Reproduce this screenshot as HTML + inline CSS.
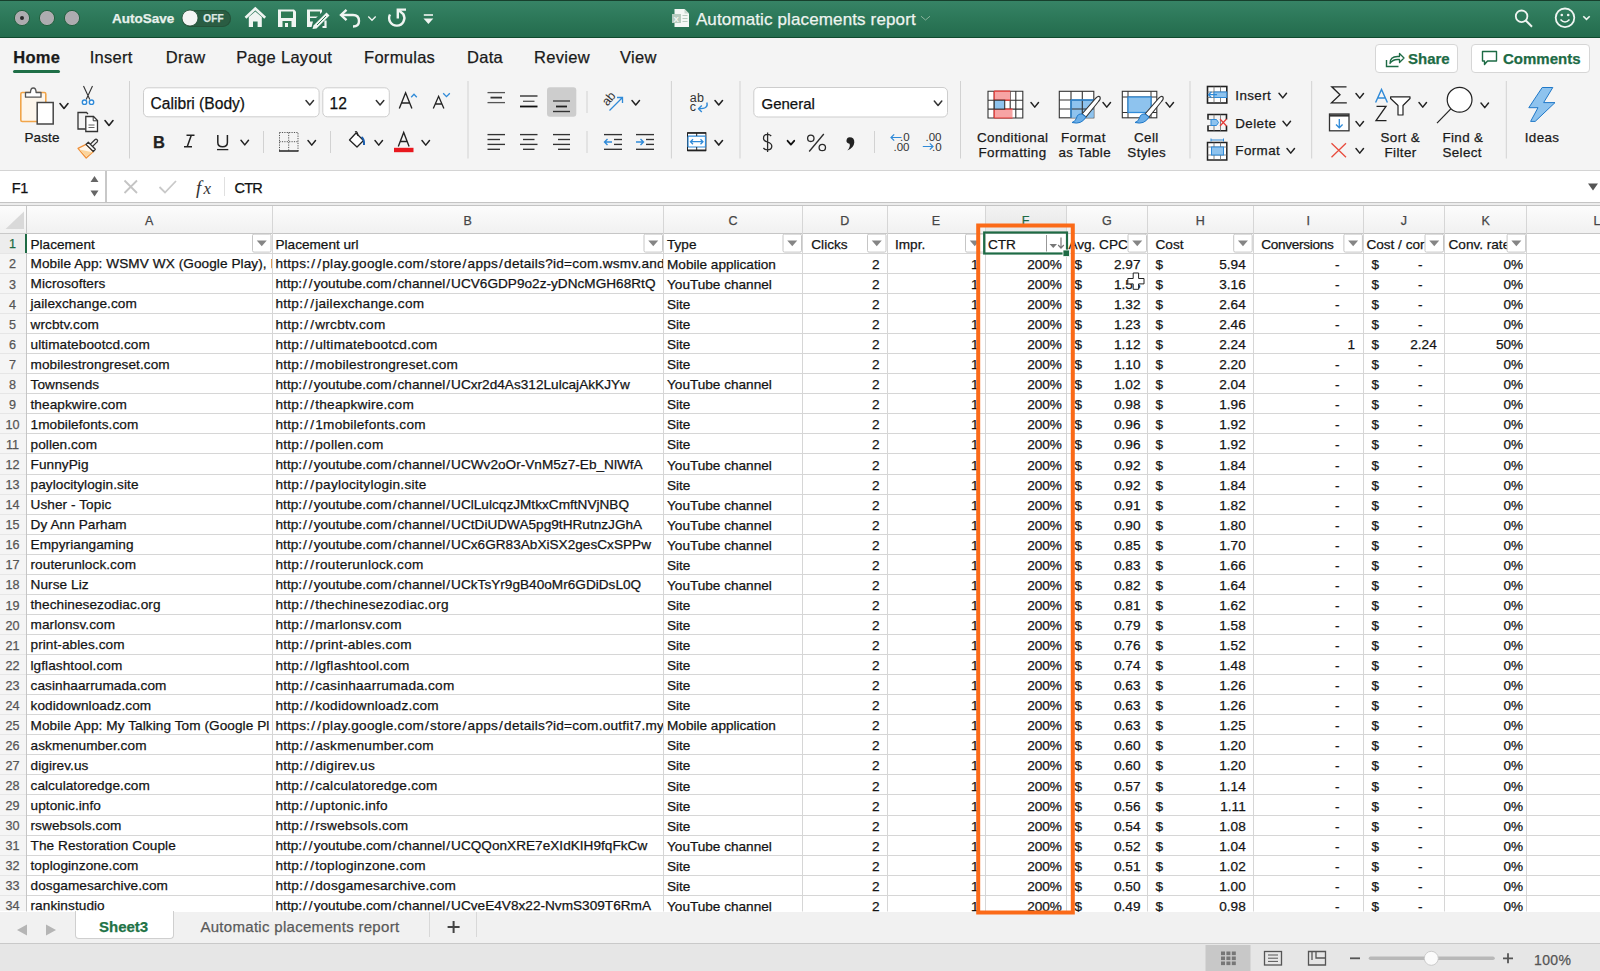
<!DOCTYPE html><html><head><meta charset="utf-8"><style>
html,body{margin:0;padding:0;}
body{width:1600px;height:971px;position:relative;overflow:hidden;background:#fff;font-family:"Liberation Sans", sans-serif;}
.sl{margin:0 1px}
.t{position:absolute;white-space:nowrap;line-height:1;-webkit-text-stroke:0.25px currentColor;}
svg{overflow:visible}
</style></head><body>
<div style="position:absolute;left:0px;top:0px;width:1600px;height:38px;background:linear-gradient(#378466,#2b7657 55%,#236b4d);"></div>
<div style="position:absolute;left:0px;top:0px;width:1600px;height:1px;background:#173f2c;"></div>
<div style="position:absolute;left:0px;top:37px;width:1600px;height:1px;background:#0f4a2e;"></div>
<div style="position:absolute;left:0px;top:38px;width:1600px;height:1px;background:#fafafa;"></div>
<svg style="position:absolute;left:13.3px;top:9px;" width="18" height="18" viewBox="0 0 18 18"><circle cx="9" cy="9" r="7.6" fill="#aeacb0" stroke="#23603f" stroke-width="1"/></svg>
<svg style="position:absolute;left:38.4px;top:9px;" width="18" height="18" viewBox="0 0 18 18"><circle cx="9" cy="9" r="7.6" fill="#aeacb0" stroke="#23603f" stroke-width="1"/></svg>
<svg style="position:absolute;left:63.099999999999994px;top:9px;" width="18" height="18" viewBox="0 0 18 18"><circle cx="9" cy="9" r="7.6" fill="#aeacb0" stroke="#23603f" stroke-width="1"/></svg>
<svg style="position:absolute;left:13.3px;top:9px;" width="18" height="18" viewBox="0 0 18 18"><circle cx="9" cy="9" r="2" fill="#2a2a2a"/></svg>
<div class="t" style="left:111.90px;top:12.27px;font-size:13.5px;color:#e8f1ec;font-weight:bold;">AutoSave</div>
<div style="position:absolute;left:182px;top:9.5px;width:49px;height:17.5px;background:#2a5d43;border-radius:9px;box-shadow:inset 0 0 0 1px #245239;"></div>
<svg style="position:absolute;left:181px;top:9px;" width="18" height="18" viewBox="0 0 18 18"><circle cx="9" cy="9" r="8" fill="#f4f4f4" stroke="#1f4a34" stroke-width="0.8"/></svg>
<div class="t" style="left:203.30px;top:13.94px;font-size:10px;color:#dfe9e3;font-weight:bold;letter-spacing:0.1px;">OFF</div>
<div style="position:absolute;left:0px;top:38px;width:1600px;height:132px;background:#f4f4f4;"></div>
<div class="t" style="left:13.20px;top:49.13px;font-size:16.5px;color:#1a1a1a;font-weight:600;letter-spacing:0.3px;">Home</div>
<div class="t" style="left:89.70px;top:49.13px;font-size:16.5px;color:#1a1a1a;font-weight:normal;letter-spacing:0.3px;">Insert</div>
<div class="t" style="left:165.70px;top:49.13px;font-size:16.5px;color:#1a1a1a;font-weight:normal;letter-spacing:0.3px;">Draw</div>
<div class="t" style="left:236.30px;top:49.13px;font-size:16.5px;color:#1a1a1a;font-weight:normal;letter-spacing:0.3px;">Page Layout</div>
<div class="t" style="left:364.00px;top:49.13px;font-size:16.5px;color:#1a1a1a;font-weight:normal;letter-spacing:0.3px;">Formulas</div>
<div class="t" style="left:467.00px;top:49.13px;font-size:16.5px;color:#1a1a1a;font-weight:normal;letter-spacing:0.3px;">Data</div>
<div class="t" style="left:534.00px;top:49.13px;font-size:16.5px;color:#1a1a1a;font-weight:normal;letter-spacing:0.3px;">Review</div>
<div class="t" style="left:620.00px;top:49.13px;font-size:16.5px;color:#1a1a1a;font-weight:normal;letter-spacing:0.3px;">View</div>
<div style="position:absolute;left:12.5px;top:69.8px;width:47.5px;height:3.5px;background:#1f6f47;border-radius:2px;"></div>
<div style="position:absolute;left:1375px;top:43.5px;width:82.5px;height:29.5px;background:#fff;border:1px solid #d6d6d6;border-radius:4px;box-sizing:border-box;"></div>
<div style="position:absolute;left:1471px;top:43.5px;width:119px;height:29.5px;background:#fff;border:1px solid #d6d6d6;border-radius:4px;box-sizing:border-box;"></div>
<div class="t" style="left:1408.00px;top:51.40px;font-size:15px;color:#1d6b45;font-weight:bold;">Share</div>
<div class="t" style="left:1503.00px;top:51.40px;font-size:15px;color:#1d6b45;font-weight:bold;">Comments</div>
<div style="position:absolute;left:0px;top:170px;width:1600px;height:1px;background:#d4d4d4;"></div>
<div style="position:absolute;left:0px;top:171px;width:1600px;height:31px;background:#fff;"></div>
<div style="position:absolute;left:105px;top:171px;width:1.5px;height:31px;background:#c8c8c8;"></div>
<div style="position:absolute;left:0px;top:202px;width:1600px;height:1px;background:#c4c4c4;"></div>
<div style="position:absolute;left:0px;top:203px;width:1600px;height:2px;background:#ececec;"></div>
<div style="position:absolute;left:0px;top:205px;width:1600px;height:1px;background:#c4c4c4;"></div>
<div class="t" style="left:11.70px;top:180.93px;font-size:14.5px;color:#111;font-weight:normal;letter-spacing:-0.3px;">F1</div>
<div class="t" style="left:234.60px;top:180.93px;font-size:14.5px;color:#111;font-weight:normal;letter-spacing:-0.8px;">CTR</div>
<div style="position:absolute;left:224px;top:177px;width:1px;height:19px;background:#e0e0e0;"></div>
<div style="position:absolute;left:0px;top:206px;width:1600px;height:27.30000000000001px;background:linear-gradient(#fcfcfc,#f1f1f1);"></div>
<div style="position:absolute;left:985px;top:206px;width:81.40000000000009px;height:27.30000000000001px;background:linear-gradient(#f3f3f3,#e6e6e6);"></div>
<div style="position:absolute;left:0px;top:233.3px;width:26.5px;height:678.2px;background:#f5f5f5;"></div>
<div style="position:absolute;left:0px;top:233.3px;width:26.5px;height:20.06px;background:#ededed;"></div>
<svg style="position:absolute;left:0;top:0" width="1600" height="971"><line x1="26.5" y1="233.50" x2="1600" y2="233.50" stroke="#c6c6c6" stroke-width="1"/><line x1="0" y1="233.50" x2="26.5" y2="233.50" stroke="#c9c9c9" stroke-width="1"/><line x1="26.5" y1="253.50" x2="1600" y2="253.50" stroke="#d6d6d6" stroke-width="1"/><line x1="0" y1="253.50" x2="26.5" y2="253.50" stroke="#e6e6e6" stroke-width="1"/><line x1="26.5" y1="273.50" x2="1600" y2="273.50" stroke="#d6d6d6" stroke-width="1"/><line x1="0" y1="273.50" x2="26.5" y2="273.50" stroke="#e6e6e6" stroke-width="1"/><line x1="26.5" y1="293.50" x2="1600" y2="293.50" stroke="#d6d6d6" stroke-width="1"/><line x1="0" y1="293.50" x2="26.5" y2="293.50" stroke="#e6e6e6" stroke-width="1"/><line x1="26.5" y1="313.50" x2="1600" y2="313.50" stroke="#d6d6d6" stroke-width="1"/><line x1="0" y1="313.50" x2="26.5" y2="313.50" stroke="#e6e6e6" stroke-width="1"/><line x1="26.5" y1="333.50" x2="1600" y2="333.50" stroke="#d6d6d6" stroke-width="1"/><line x1="0" y1="333.50" x2="26.5" y2="333.50" stroke="#e6e6e6" stroke-width="1"/><line x1="26.5" y1="353.50" x2="1600" y2="353.50" stroke="#d6d6d6" stroke-width="1"/><line x1="0" y1="353.50" x2="26.5" y2="353.50" stroke="#e6e6e6" stroke-width="1"/><line x1="26.5" y1="373.50" x2="1600" y2="373.50" stroke="#d6d6d6" stroke-width="1"/><line x1="0" y1="373.50" x2="26.5" y2="373.50" stroke="#e6e6e6" stroke-width="1"/><line x1="26.5" y1="393.50" x2="1600" y2="393.50" stroke="#d6d6d6" stroke-width="1"/><line x1="0" y1="393.50" x2="26.5" y2="393.50" stroke="#e6e6e6" stroke-width="1"/><line x1="26.5" y1="413.50" x2="1600" y2="413.50" stroke="#d6d6d6" stroke-width="1"/><line x1="0" y1="413.50" x2="26.5" y2="413.50" stroke="#e6e6e6" stroke-width="1"/><line x1="26.5" y1="433.50" x2="1600" y2="433.50" stroke="#d6d6d6" stroke-width="1"/><line x1="0" y1="433.50" x2="26.5" y2="433.50" stroke="#e6e6e6" stroke-width="1"/><line x1="26.5" y1="453.50" x2="1600" y2="453.50" stroke="#d6d6d6" stroke-width="1"/><line x1="0" y1="453.50" x2="26.5" y2="453.50" stroke="#e6e6e6" stroke-width="1"/><line x1="26.5" y1="474.50" x2="1600" y2="474.50" stroke="#d6d6d6" stroke-width="1"/><line x1="0" y1="474.50" x2="26.5" y2="474.50" stroke="#e6e6e6" stroke-width="1"/><line x1="26.5" y1="494.50" x2="1600" y2="494.50" stroke="#d6d6d6" stroke-width="1"/><line x1="0" y1="494.50" x2="26.5" y2="494.50" stroke="#e6e6e6" stroke-width="1"/><line x1="26.5" y1="514.50" x2="1600" y2="514.50" stroke="#d6d6d6" stroke-width="1"/><line x1="0" y1="514.50" x2="26.5" y2="514.50" stroke="#e6e6e6" stroke-width="1"/><line x1="26.5" y1="534.50" x2="1600" y2="534.50" stroke="#d6d6d6" stroke-width="1"/><line x1="0" y1="534.50" x2="26.5" y2="534.50" stroke="#e6e6e6" stroke-width="1"/><line x1="26.5" y1="554.50" x2="1600" y2="554.50" stroke="#d6d6d6" stroke-width="1"/><line x1="0" y1="554.50" x2="26.5" y2="554.50" stroke="#e6e6e6" stroke-width="1"/><line x1="26.5" y1="574.50" x2="1600" y2="574.50" stroke="#d6d6d6" stroke-width="1"/><line x1="0" y1="574.50" x2="26.5" y2="574.50" stroke="#e6e6e6" stroke-width="1"/><line x1="26.5" y1="594.50" x2="1600" y2="594.50" stroke="#d6d6d6" stroke-width="1"/><line x1="0" y1="594.50" x2="26.5" y2="594.50" stroke="#e6e6e6" stroke-width="1"/><line x1="26.5" y1="614.50" x2="1600" y2="614.50" stroke="#d6d6d6" stroke-width="1"/><line x1="0" y1="614.50" x2="26.5" y2="614.50" stroke="#e6e6e6" stroke-width="1"/><line x1="26.5" y1="634.50" x2="1600" y2="634.50" stroke="#d6d6d6" stroke-width="1"/><line x1="0" y1="634.50" x2="26.5" y2="634.50" stroke="#e6e6e6" stroke-width="1"/><line x1="26.5" y1="654.50" x2="1600" y2="654.50" stroke="#d6d6d6" stroke-width="1"/><line x1="0" y1="654.50" x2="26.5" y2="654.50" stroke="#e6e6e6" stroke-width="1"/><line x1="26.5" y1="674.50" x2="1600" y2="674.50" stroke="#d6d6d6" stroke-width="1"/><line x1="0" y1="674.50" x2="26.5" y2="674.50" stroke="#e6e6e6" stroke-width="1"/><line x1="26.5" y1="694.50" x2="1600" y2="694.50" stroke="#d6d6d6" stroke-width="1"/><line x1="0" y1="694.50" x2="26.5" y2="694.50" stroke="#e6e6e6" stroke-width="1"/><line x1="26.5" y1="714.50" x2="1600" y2="714.50" stroke="#d6d6d6" stroke-width="1"/><line x1="0" y1="714.50" x2="26.5" y2="714.50" stroke="#e6e6e6" stroke-width="1"/><line x1="26.5" y1="734.50" x2="1600" y2="734.50" stroke="#d6d6d6" stroke-width="1"/><line x1="0" y1="734.50" x2="26.5" y2="734.50" stroke="#e6e6e6" stroke-width="1"/><line x1="26.5" y1="754.50" x2="1600" y2="754.50" stroke="#d6d6d6" stroke-width="1"/><line x1="0" y1="754.50" x2="26.5" y2="754.50" stroke="#e6e6e6" stroke-width="1"/><line x1="26.5" y1="774.50" x2="1600" y2="774.50" stroke="#d6d6d6" stroke-width="1"/><line x1="0" y1="774.50" x2="26.5" y2="774.50" stroke="#e6e6e6" stroke-width="1"/><line x1="26.5" y1="794.50" x2="1600" y2="794.50" stroke="#d6d6d6" stroke-width="1"/><line x1="0" y1="794.50" x2="26.5" y2="794.50" stroke="#e6e6e6" stroke-width="1"/><line x1="26.5" y1="815.50" x2="1600" y2="815.50" stroke="#d6d6d6" stroke-width="1"/><line x1="0" y1="815.50" x2="26.5" y2="815.50" stroke="#e6e6e6" stroke-width="1"/><line x1="26.5" y1="835.50" x2="1600" y2="835.50" stroke="#d6d6d6" stroke-width="1"/><line x1="0" y1="835.50" x2="26.5" y2="835.50" stroke="#e6e6e6" stroke-width="1"/><line x1="26.5" y1="855.50" x2="1600" y2="855.50" stroke="#d6d6d6" stroke-width="1"/><line x1="0" y1="855.50" x2="26.5" y2="855.50" stroke="#e6e6e6" stroke-width="1"/><line x1="26.5" y1="875.50" x2="1600" y2="875.50" stroke="#d6d6d6" stroke-width="1"/><line x1="0" y1="875.50" x2="26.5" y2="875.50" stroke="#e6e6e6" stroke-width="1"/><line x1="26.5" y1="895.50" x2="1600" y2="895.50" stroke="#d6d6d6" stroke-width="1"/><line x1="0" y1="895.50" x2="26.5" y2="895.50" stroke="#e6e6e6" stroke-width="1"/><line x1="26.50" y1="206" x2="26.50" y2="911.5" stroke="#c6c6c6" stroke-width="1"/><line x1="272.50" y1="206" x2="272.50" y2="911.5" stroke="#d6d6d6" stroke-width="1"/><line x1="663.50" y1="206" x2="663.50" y2="911.5" stroke="#d6d6d6" stroke-width="1"/><line x1="802.50" y1="206" x2="802.50" y2="911.5" stroke="#d6d6d6" stroke-width="1"/><line x1="887.50" y1="206" x2="887.50" y2="911.5" stroke="#d6d6d6" stroke-width="1"/><line x1="985.50" y1="206" x2="985.50" y2="911.5" stroke="#d6d6d6" stroke-width="1"/><line x1="1066.50" y1="206" x2="1066.50" y2="911.5" stroke="#d6d6d6" stroke-width="1"/><line x1="1147.50" y1="206" x2="1147.50" y2="911.5" stroke="#d6d6d6" stroke-width="1"/><line x1="1253.50" y1="206" x2="1253.50" y2="911.5" stroke="#d6d6d6" stroke-width="1"/><line x1="1363.50" y1="206" x2="1363.50" y2="911.5" stroke="#d6d6d6" stroke-width="1"/><line x1="1444.50" y1="206" x2="1444.50" y2="911.5" stroke="#d6d6d6" stroke-width="1"/><line x1="1526.50" y1="206" x2="1526.50" y2="911.5" stroke="#d6d6d6" stroke-width="1"/></svg>
<div class="t" style="left:149.25px;transform:translateX(-50%);top:215.32px;font-size:12.5px;color:#454545;font-weight:normal;">A</div>
<div class="t" style="left:467.75px;transform:translateX(-50%);top:215.32px;font-size:12.5px;color:#454545;font-weight:normal;">B</div>
<div class="t" style="left:733.00px;transform:translateX(-50%);top:215.32px;font-size:12.5px;color:#454545;font-weight:normal;">C</div>
<div class="t" style="left:844.75px;transform:translateX(-50%);top:215.32px;font-size:12.5px;color:#454545;font-weight:normal;">D</div>
<div class="t" style="left:936.00px;transform:translateX(-50%);top:215.32px;font-size:12.5px;color:#454545;font-weight:normal;">E</div>
<div class="t" style="left:1025.70px;transform:translateX(-50%);top:215.32px;font-size:12.5px;color:#1d6b45;font-weight:normal;">F</div>
<div class="t" style="left:1106.95px;transform:translateX(-50%);top:215.32px;font-size:12.5px;color:#454545;font-weight:normal;">G</div>
<div class="t" style="left:1200.35px;transform:translateX(-50%);top:215.32px;font-size:12.5px;color:#454545;font-weight:normal;">H</div>
<div class="t" style="left:1308.30px;transform:translateX(-50%);top:215.32px;font-size:12.5px;color:#454545;font-weight:normal;">I</div>
<div class="t" style="left:1403.95px;transform:translateX(-50%);top:215.32px;font-size:12.5px;color:#454545;font-weight:normal;">J</div>
<div class="t" style="left:1485.55px;transform:translateX(-50%);top:215.32px;font-size:12.5px;color:#454545;font-weight:normal;">K</div>
<div class="t" style="left:1597.00px;transform:translateX(-50%);top:215.32px;font-size:12.5px;color:#454545;font-weight:normal;">L</div>
<div class="t" style="left:12.60px;transform:translateX(-50%);top:238.43px;font-size:12.6px;color:#1d6b45;font-weight:normal;">1</div>
<div class="t" style="left:12.60px;transform:translateX(-50%);top:258.49px;font-size:12.6px;color:#555;font-weight:normal;">2</div>
<div class="t" style="left:12.60px;transform:translateX(-50%);top:278.55px;font-size:12.6px;color:#555;font-weight:normal;">3</div>
<div class="t" style="left:12.60px;transform:translateX(-50%);top:298.61px;font-size:12.6px;color:#555;font-weight:normal;">4</div>
<div class="t" style="left:12.60px;transform:translateX(-50%);top:318.67px;font-size:12.6px;color:#555;font-weight:normal;">5</div>
<div class="t" style="left:12.60px;transform:translateX(-50%);top:338.73px;font-size:12.6px;color:#555;font-weight:normal;">6</div>
<div class="t" style="left:12.60px;transform:translateX(-50%);top:358.79px;font-size:12.6px;color:#555;font-weight:normal;">7</div>
<div class="t" style="left:12.60px;transform:translateX(-50%);top:378.85px;font-size:12.6px;color:#555;font-weight:normal;">8</div>
<div class="t" style="left:12.60px;transform:translateX(-50%);top:398.91px;font-size:12.6px;color:#555;font-weight:normal;">9</div>
<div class="t" style="left:12.60px;transform:translateX(-50%);top:418.97px;font-size:12.6px;color:#555;font-weight:normal;">10</div>
<div class="t" style="left:12.60px;transform:translateX(-50%);top:439.03px;font-size:12.6px;color:#555;font-weight:normal;">11</div>
<div class="t" style="left:12.60px;transform:translateX(-50%);top:459.09px;font-size:12.6px;color:#555;font-weight:normal;">12</div>
<div class="t" style="left:12.60px;transform:translateX(-50%);top:479.15px;font-size:12.6px;color:#555;font-weight:normal;">13</div>
<div class="t" style="left:12.60px;transform:translateX(-50%);top:499.21px;font-size:12.6px;color:#555;font-weight:normal;">14</div>
<div class="t" style="left:12.60px;transform:translateX(-50%);top:519.27px;font-size:12.6px;color:#555;font-weight:normal;">15</div>
<div class="t" style="left:12.60px;transform:translateX(-50%);top:539.33px;font-size:12.6px;color:#555;font-weight:normal;">16</div>
<div class="t" style="left:12.60px;transform:translateX(-50%);top:559.39px;font-size:12.6px;color:#555;font-weight:normal;">17</div>
<div class="t" style="left:12.60px;transform:translateX(-50%);top:579.45px;font-size:12.6px;color:#555;font-weight:normal;">18</div>
<div class="t" style="left:12.60px;transform:translateX(-50%);top:599.51px;font-size:12.6px;color:#555;font-weight:normal;">19</div>
<div class="t" style="left:12.60px;transform:translateX(-50%);top:619.57px;font-size:12.6px;color:#555;font-weight:normal;">20</div>
<div class="t" style="left:12.60px;transform:translateX(-50%);top:639.63px;font-size:12.6px;color:#555;font-weight:normal;">21</div>
<div class="t" style="left:12.60px;transform:translateX(-50%);top:659.69px;font-size:12.6px;color:#555;font-weight:normal;">22</div>
<div class="t" style="left:12.60px;transform:translateX(-50%);top:679.75px;font-size:12.6px;color:#555;font-weight:normal;">23</div>
<div class="t" style="left:12.60px;transform:translateX(-50%);top:699.81px;font-size:12.6px;color:#555;font-weight:normal;">24</div>
<div class="t" style="left:12.60px;transform:translateX(-50%);top:719.87px;font-size:12.6px;color:#555;font-weight:normal;">25</div>
<div class="t" style="left:12.60px;transform:translateX(-50%);top:739.93px;font-size:12.6px;color:#555;font-weight:normal;">26</div>
<div class="t" style="left:12.60px;transform:translateX(-50%);top:759.99px;font-size:12.6px;color:#555;font-weight:normal;">27</div>
<div class="t" style="left:12.60px;transform:translateX(-50%);top:780.05px;font-size:12.6px;color:#555;font-weight:normal;">28</div>
<div class="t" style="left:12.60px;transform:translateX(-50%);top:800.11px;font-size:12.6px;color:#555;font-weight:normal;">29</div>
<div class="t" style="left:12.60px;transform:translateX(-50%);top:820.17px;font-size:12.6px;color:#555;font-weight:normal;">30</div>
<div class="t" style="left:12.60px;transform:translateX(-50%);top:840.23px;font-size:12.6px;color:#555;font-weight:normal;">31</div>
<div class="t" style="left:12.60px;transform:translateX(-50%);top:860.29px;font-size:12.6px;color:#555;font-weight:normal;">32</div>
<div class="t" style="left:12.60px;transform:translateX(-50%);top:880.35px;font-size:12.6px;color:#555;font-weight:normal;">33</div>
<div class="t" style="left:12.60px;transform:translateX(-50%);top:900.41px;font-size:12.6px;color:#555;font-weight:normal;">34</div>
<div style="position:absolute;left:25px;top:234.3px;width:2.2px;height:19.06px;background:#1e6b45;"></div>
<div class="t" style="left:30.50px;top:237.89px;font-size:13.6px;color:#141414;font-weight:normal;">Placement</div>
<div class="t" style="left:275.50px;top:237.89px;font-size:13.6px;color:#141414;font-weight:normal;">Placement url</div>
<div class="t" style="left:667.00px;top:237.89px;font-size:13.6px;color:#141414;font-weight:normal;">Type</div>
<div class="t" style="left:811.30px;top:237.89px;font-size:13.6px;color:#141414;font-weight:normal;">Clicks</div>
<div class="t" style="left:895.00px;top:237.89px;font-size:13.6px;color:#141414;font-weight:normal;">Impr.</div>
<div class="t" style="left:988.00px;top:237.89px;font-size:13.6px;color:#141414;font-weight:normal;">CTR</div>
<div class="t" style="left:1068.40px;top:237.89px;font-size:13.6px;color:#141414;font-weight:normal;">Avg. CPC</div>
<div class="t" style="left:1155.50px;top:237.89px;font-size:13.6px;color:#141414;font-weight:normal;">Cost</div>
<div class="t" style="left:1261.20px;top:237.89px;font-size:13.6px;color:#141414;font-weight:normal;letter-spacing:-0.3px;">Conversions</div>
<div class="t" style="left:1366.40px;top:237.89px;font-size:13.6px;color:#141414;font-weight:normal;">Cost / cor</div>
<div class="t" style="left:1448.50px;top:237.89px;font-size:13.6px;color:#141414;font-weight:normal;">Conv. rate</div>
<div style="position:absolute;left:27.50px;top:254.35px;width:244.00px;height:19.6px;overflow:hidden"><div class="t" style="left:3.00px;top:3px;font-size:13.6px;color:#141414;letter-spacing:0.08px;">Mobile App: WSMV WX (Google Play), I</div></div>
<div style="position:absolute;left:273.00px;top:254.35px;width:390.00px;height:19.6px;overflow:hidden"><div class="t" style="left:2.50px;top:3px;font-size:13.6px;color:#141414;letter-spacing:0.25px;">https:<span class=sl>/</span><span class=sl>/</span>play.google.com<span class=sl>/</span>store<span class=sl>/</span>apps<span class=sl>/</span>details?id=com.wsmv.and</div></div>
<div class="t" style="left:667.00px;top:257.95px;font-size:13.6px;color:#141414;font-weight:normal;">Mobile application</div>
<div class="t" style="right:720.50px;top:257.95px;font-size:13.6px;color:#141414;font-weight:normal;">2</div>
<div class="t" style="right:621.50px;top:257.95px;font-size:13.6px;color:#141414;font-weight:normal;">1</div>
<div class="t" style="right:538.10px;top:257.95px;font-size:13.6px;color:#141414;font-weight:normal;">200%</div>
<div class="t" style="left:1074.40px;top:257.95px;font-size:13.6px;color:#141414;font-weight:normal;">$</div>
<div class="t" style="right:459.50px;top:257.95px;font-size:13.6px;color:#141414;font-weight:normal;">2.97</div>
<div class="t" style="left:1155.50px;top:257.95px;font-size:13.6px;color:#141414;font-weight:normal;">$</div>
<div class="t" style="right:354.30px;top:257.95px;font-size:13.6px;color:#141414;font-weight:normal;">5.94</div>
<div class="t" style="right:260.60px;top:257.95px;font-size:13.6px;color:#141414;font-weight:normal;">-</div>
<div class="t" style="right:177.50px;top:257.95px;font-size:13.6px;color:#141414;font-weight:normal;">-</div>
<div class="t" style="right:76.90px;top:257.95px;font-size:13.6px;color:#141414;font-weight:normal;">0%</div>
<div class="t" style="left:1371.40px;top:257.95px;font-size:13.6px;color:#141414;font-weight:normal;">$</div>
<div style="position:absolute;left:27.50px;top:274.41px;width:244.00px;height:19.6px;overflow:hidden"><div class="t" style="left:3.00px;top:3px;font-size:13.6px;color:#141414;letter-spacing:0.08px;">Microsofters</div></div>
<div style="position:absolute;left:273.00px;top:274.41px;width:390.00px;height:19.6px;overflow:hidden"><div class="t" style="left:2.50px;top:3px;font-size:13.6px;color:#141414;letter-spacing:0.02px;">http:<span class=sl>/</span><span class=sl>/</span>youtube.com<span class=sl>/</span>channel<span class=sl>/</span>UCV6GDP9o2z-yDNcMGH68RtQ</div></div>
<div class="t" style="left:667.00px;top:278.01px;font-size:13.6px;color:#141414;font-weight:normal;">YouTube channel</div>
<div class="t" style="right:720.50px;top:278.01px;font-size:13.6px;color:#141414;font-weight:normal;">2</div>
<div class="t" style="right:621.50px;top:278.01px;font-size:13.6px;color:#141414;font-weight:normal;">1</div>
<div class="t" style="right:538.10px;top:278.01px;font-size:13.6px;color:#141414;font-weight:normal;">200%</div>
<div class="t" style="left:1074.40px;top:278.01px;font-size:13.6px;color:#141414;font-weight:normal;">$</div>
<div class="t" style="right:459.50px;top:278.01px;font-size:13.6px;color:#141414;font-weight:normal;">1.58</div>
<div class="t" style="left:1155.50px;top:278.01px;font-size:13.6px;color:#141414;font-weight:normal;">$</div>
<div class="t" style="right:354.30px;top:278.01px;font-size:13.6px;color:#141414;font-weight:normal;">3.16</div>
<div class="t" style="right:260.60px;top:278.01px;font-size:13.6px;color:#141414;font-weight:normal;">-</div>
<div class="t" style="right:177.50px;top:278.01px;font-size:13.6px;color:#141414;font-weight:normal;">-</div>
<div class="t" style="right:76.90px;top:278.01px;font-size:13.6px;color:#141414;font-weight:normal;">0%</div>
<div class="t" style="left:1371.40px;top:278.01px;font-size:13.6px;color:#141414;font-weight:normal;">$</div>
<div style="position:absolute;left:27.50px;top:294.47px;width:244.00px;height:19.6px;overflow:hidden"><div class="t" style="left:3.00px;top:3px;font-size:13.6px;color:#141414;letter-spacing:0.08px;">jailexchange.com</div></div>
<div style="position:absolute;left:273.00px;top:294.47px;width:390.00px;height:19.6px;overflow:hidden"><div class="t" style="left:2.50px;top:3px;font-size:13.6px;color:#141414;letter-spacing:0.25px;">http:<span class=sl>/</span><span class=sl>/</span>jailexchange.com</div></div>
<div class="t" style="left:667.00px;top:298.07px;font-size:13.6px;color:#141414;font-weight:normal;">Site</div>
<div class="t" style="right:720.50px;top:298.07px;font-size:13.6px;color:#141414;font-weight:normal;">2</div>
<div class="t" style="right:621.50px;top:298.07px;font-size:13.6px;color:#141414;font-weight:normal;">1</div>
<div class="t" style="right:538.10px;top:298.07px;font-size:13.6px;color:#141414;font-weight:normal;">200%</div>
<div class="t" style="left:1074.40px;top:298.07px;font-size:13.6px;color:#141414;font-weight:normal;">$</div>
<div class="t" style="right:459.50px;top:298.07px;font-size:13.6px;color:#141414;font-weight:normal;">1.32</div>
<div class="t" style="left:1155.50px;top:298.07px;font-size:13.6px;color:#141414;font-weight:normal;">$</div>
<div class="t" style="right:354.30px;top:298.07px;font-size:13.6px;color:#141414;font-weight:normal;">2.64</div>
<div class="t" style="right:260.60px;top:298.07px;font-size:13.6px;color:#141414;font-weight:normal;">-</div>
<div class="t" style="right:177.50px;top:298.07px;font-size:13.6px;color:#141414;font-weight:normal;">-</div>
<div class="t" style="right:76.90px;top:298.07px;font-size:13.6px;color:#141414;font-weight:normal;">0%</div>
<div class="t" style="left:1371.40px;top:298.07px;font-size:13.6px;color:#141414;font-weight:normal;">$</div>
<div style="position:absolute;left:27.50px;top:314.53px;width:244.00px;height:19.6px;overflow:hidden"><div class="t" style="left:3.00px;top:3px;font-size:13.6px;color:#141414;letter-spacing:0.08px;">wrcbtv.com</div></div>
<div style="position:absolute;left:273.00px;top:314.53px;width:390.00px;height:19.6px;overflow:hidden"><div class="t" style="left:2.50px;top:3px;font-size:13.6px;color:#141414;letter-spacing:0.25px;">http:<span class=sl>/</span><span class=sl>/</span>wrcbtv.com</div></div>
<div class="t" style="left:667.00px;top:318.13px;font-size:13.6px;color:#141414;font-weight:normal;">Site</div>
<div class="t" style="right:720.50px;top:318.13px;font-size:13.6px;color:#141414;font-weight:normal;">2</div>
<div class="t" style="right:621.50px;top:318.13px;font-size:13.6px;color:#141414;font-weight:normal;">1</div>
<div class="t" style="right:538.10px;top:318.13px;font-size:13.6px;color:#141414;font-weight:normal;">200%</div>
<div class="t" style="left:1074.40px;top:318.13px;font-size:13.6px;color:#141414;font-weight:normal;">$</div>
<div class="t" style="right:459.50px;top:318.13px;font-size:13.6px;color:#141414;font-weight:normal;">1.23</div>
<div class="t" style="left:1155.50px;top:318.13px;font-size:13.6px;color:#141414;font-weight:normal;">$</div>
<div class="t" style="right:354.30px;top:318.13px;font-size:13.6px;color:#141414;font-weight:normal;">2.46</div>
<div class="t" style="right:260.60px;top:318.13px;font-size:13.6px;color:#141414;font-weight:normal;">-</div>
<div class="t" style="right:177.50px;top:318.13px;font-size:13.6px;color:#141414;font-weight:normal;">-</div>
<div class="t" style="right:76.90px;top:318.13px;font-size:13.6px;color:#141414;font-weight:normal;">0%</div>
<div class="t" style="left:1371.40px;top:318.13px;font-size:13.6px;color:#141414;font-weight:normal;">$</div>
<div style="position:absolute;left:27.50px;top:334.59px;width:244.00px;height:19.6px;overflow:hidden"><div class="t" style="left:3.00px;top:3px;font-size:13.6px;color:#141414;letter-spacing:0.08px;">ultimatebootcd.com</div></div>
<div style="position:absolute;left:273.00px;top:334.59px;width:390.00px;height:19.6px;overflow:hidden"><div class="t" style="left:2.50px;top:3px;font-size:13.6px;color:#141414;letter-spacing:0.25px;">http:<span class=sl>/</span><span class=sl>/</span>ultimatebootcd.com</div></div>
<div class="t" style="left:667.00px;top:338.19px;font-size:13.6px;color:#141414;font-weight:normal;">Site</div>
<div class="t" style="right:720.50px;top:338.19px;font-size:13.6px;color:#141414;font-weight:normal;">2</div>
<div class="t" style="right:621.50px;top:338.19px;font-size:13.6px;color:#141414;font-weight:normal;">1</div>
<div class="t" style="right:538.10px;top:338.19px;font-size:13.6px;color:#141414;font-weight:normal;">200%</div>
<div class="t" style="left:1074.40px;top:338.19px;font-size:13.6px;color:#141414;font-weight:normal;">$</div>
<div class="t" style="right:459.50px;top:338.19px;font-size:13.6px;color:#141414;font-weight:normal;">1.12</div>
<div class="t" style="left:1155.50px;top:338.19px;font-size:13.6px;color:#141414;font-weight:normal;">$</div>
<div class="t" style="right:354.30px;top:338.19px;font-size:13.6px;color:#141414;font-weight:normal;">2.24</div>
<div class="t" style="right:244.90px;top:338.19px;font-size:13.6px;color:#141414;font-weight:normal;">1</div>
<div class="t" style="right:163.30px;top:338.19px;font-size:13.6px;color:#141414;font-weight:normal;">2.24</div>
<div class="t" style="right:76.90px;top:338.19px;font-size:13.6px;color:#141414;font-weight:normal;">50%</div>
<div class="t" style="left:1371.40px;top:338.19px;font-size:13.6px;color:#141414;font-weight:normal;">$</div>
<div style="position:absolute;left:27.50px;top:354.65px;width:244.00px;height:19.6px;overflow:hidden"><div class="t" style="left:3.00px;top:3px;font-size:13.6px;color:#141414;letter-spacing:0.08px;">mobilestrongreset.com</div></div>
<div style="position:absolute;left:273.00px;top:354.65px;width:390.00px;height:19.6px;overflow:hidden"><div class="t" style="left:2.50px;top:3px;font-size:13.6px;color:#141414;letter-spacing:0.25px;">http:<span class=sl>/</span><span class=sl>/</span>mobilestrongreset.com</div></div>
<div class="t" style="left:667.00px;top:358.25px;font-size:13.6px;color:#141414;font-weight:normal;">Site</div>
<div class="t" style="right:720.50px;top:358.25px;font-size:13.6px;color:#141414;font-weight:normal;">2</div>
<div class="t" style="right:621.50px;top:358.25px;font-size:13.6px;color:#141414;font-weight:normal;">1</div>
<div class="t" style="right:538.10px;top:358.25px;font-size:13.6px;color:#141414;font-weight:normal;">200%</div>
<div class="t" style="left:1074.40px;top:358.25px;font-size:13.6px;color:#141414;font-weight:normal;">$</div>
<div class="t" style="right:459.50px;top:358.25px;font-size:13.6px;color:#141414;font-weight:normal;">1.10</div>
<div class="t" style="left:1155.50px;top:358.25px;font-size:13.6px;color:#141414;font-weight:normal;">$</div>
<div class="t" style="right:354.30px;top:358.25px;font-size:13.6px;color:#141414;font-weight:normal;">2.20</div>
<div class="t" style="right:260.60px;top:358.25px;font-size:13.6px;color:#141414;font-weight:normal;">-</div>
<div class="t" style="right:177.50px;top:358.25px;font-size:13.6px;color:#141414;font-weight:normal;">-</div>
<div class="t" style="right:76.90px;top:358.25px;font-size:13.6px;color:#141414;font-weight:normal;">0%</div>
<div class="t" style="left:1371.40px;top:358.25px;font-size:13.6px;color:#141414;font-weight:normal;">$</div>
<div style="position:absolute;left:27.50px;top:374.71px;width:244.00px;height:19.6px;overflow:hidden"><div class="t" style="left:3.00px;top:3px;font-size:13.6px;color:#141414;letter-spacing:0.08px;">Townsends</div></div>
<div style="position:absolute;left:273.00px;top:374.71px;width:390.00px;height:19.6px;overflow:hidden"><div class="t" style="left:2.50px;top:3px;font-size:13.6px;color:#141414;letter-spacing:0.02px;">http:<span class=sl>/</span><span class=sl>/</span>youtube.com<span class=sl>/</span>channel<span class=sl>/</span>UCxr2d4As312LulcajAkKJYw</div></div>
<div class="t" style="left:667.00px;top:378.31px;font-size:13.6px;color:#141414;font-weight:normal;">YouTube channel</div>
<div class="t" style="right:720.50px;top:378.31px;font-size:13.6px;color:#141414;font-weight:normal;">2</div>
<div class="t" style="right:621.50px;top:378.31px;font-size:13.6px;color:#141414;font-weight:normal;">1</div>
<div class="t" style="right:538.10px;top:378.31px;font-size:13.6px;color:#141414;font-weight:normal;">200%</div>
<div class="t" style="left:1074.40px;top:378.31px;font-size:13.6px;color:#141414;font-weight:normal;">$</div>
<div class="t" style="right:459.50px;top:378.31px;font-size:13.6px;color:#141414;font-weight:normal;">1.02</div>
<div class="t" style="left:1155.50px;top:378.31px;font-size:13.6px;color:#141414;font-weight:normal;">$</div>
<div class="t" style="right:354.30px;top:378.31px;font-size:13.6px;color:#141414;font-weight:normal;">2.04</div>
<div class="t" style="right:260.60px;top:378.31px;font-size:13.6px;color:#141414;font-weight:normal;">-</div>
<div class="t" style="right:177.50px;top:378.31px;font-size:13.6px;color:#141414;font-weight:normal;">-</div>
<div class="t" style="right:76.90px;top:378.31px;font-size:13.6px;color:#141414;font-weight:normal;">0%</div>
<div class="t" style="left:1371.40px;top:378.31px;font-size:13.6px;color:#141414;font-weight:normal;">$</div>
<div style="position:absolute;left:27.50px;top:394.77px;width:244.00px;height:19.6px;overflow:hidden"><div class="t" style="left:3.00px;top:3px;font-size:13.6px;color:#141414;letter-spacing:0.08px;">theapkwire.com</div></div>
<div style="position:absolute;left:273.00px;top:394.77px;width:390.00px;height:19.6px;overflow:hidden"><div class="t" style="left:2.50px;top:3px;font-size:13.6px;color:#141414;letter-spacing:0.25px;">http:<span class=sl>/</span><span class=sl>/</span>theapkwire.com</div></div>
<div class="t" style="left:667.00px;top:398.37px;font-size:13.6px;color:#141414;font-weight:normal;">Site</div>
<div class="t" style="right:720.50px;top:398.37px;font-size:13.6px;color:#141414;font-weight:normal;">2</div>
<div class="t" style="right:621.50px;top:398.37px;font-size:13.6px;color:#141414;font-weight:normal;">1</div>
<div class="t" style="right:538.10px;top:398.37px;font-size:13.6px;color:#141414;font-weight:normal;">200%</div>
<div class="t" style="left:1074.40px;top:398.37px;font-size:13.6px;color:#141414;font-weight:normal;">$</div>
<div class="t" style="right:459.50px;top:398.37px;font-size:13.6px;color:#141414;font-weight:normal;">0.98</div>
<div class="t" style="left:1155.50px;top:398.37px;font-size:13.6px;color:#141414;font-weight:normal;">$</div>
<div class="t" style="right:354.30px;top:398.37px;font-size:13.6px;color:#141414;font-weight:normal;">1.96</div>
<div class="t" style="right:260.60px;top:398.37px;font-size:13.6px;color:#141414;font-weight:normal;">-</div>
<div class="t" style="right:177.50px;top:398.37px;font-size:13.6px;color:#141414;font-weight:normal;">-</div>
<div class="t" style="right:76.90px;top:398.37px;font-size:13.6px;color:#141414;font-weight:normal;">0%</div>
<div class="t" style="left:1371.40px;top:398.37px;font-size:13.6px;color:#141414;font-weight:normal;">$</div>
<div style="position:absolute;left:27.50px;top:414.83px;width:244.00px;height:19.6px;overflow:hidden"><div class="t" style="left:3.00px;top:3px;font-size:13.6px;color:#141414;letter-spacing:0.08px;">1mobilefonts.com</div></div>
<div style="position:absolute;left:273.00px;top:414.83px;width:390.00px;height:19.6px;overflow:hidden"><div class="t" style="left:2.50px;top:3px;font-size:13.6px;color:#141414;letter-spacing:0.25px;">http:<span class=sl>/</span><span class=sl>/</span>1mobilefonts.com</div></div>
<div class="t" style="left:667.00px;top:418.43px;font-size:13.6px;color:#141414;font-weight:normal;">Site</div>
<div class="t" style="right:720.50px;top:418.43px;font-size:13.6px;color:#141414;font-weight:normal;">2</div>
<div class="t" style="right:621.50px;top:418.43px;font-size:13.6px;color:#141414;font-weight:normal;">1</div>
<div class="t" style="right:538.10px;top:418.43px;font-size:13.6px;color:#141414;font-weight:normal;">200%</div>
<div class="t" style="left:1074.40px;top:418.43px;font-size:13.6px;color:#141414;font-weight:normal;">$</div>
<div class="t" style="right:459.50px;top:418.43px;font-size:13.6px;color:#141414;font-weight:normal;">0.96</div>
<div class="t" style="left:1155.50px;top:418.43px;font-size:13.6px;color:#141414;font-weight:normal;">$</div>
<div class="t" style="right:354.30px;top:418.43px;font-size:13.6px;color:#141414;font-weight:normal;">1.92</div>
<div class="t" style="right:260.60px;top:418.43px;font-size:13.6px;color:#141414;font-weight:normal;">-</div>
<div class="t" style="right:177.50px;top:418.43px;font-size:13.6px;color:#141414;font-weight:normal;">-</div>
<div class="t" style="right:76.90px;top:418.43px;font-size:13.6px;color:#141414;font-weight:normal;">0%</div>
<div class="t" style="left:1371.40px;top:418.43px;font-size:13.6px;color:#141414;font-weight:normal;">$</div>
<div style="position:absolute;left:27.50px;top:434.89px;width:244.00px;height:19.6px;overflow:hidden"><div class="t" style="left:3.00px;top:3px;font-size:13.6px;color:#141414;letter-spacing:0.08px;">pollen.com</div></div>
<div style="position:absolute;left:273.00px;top:434.89px;width:390.00px;height:19.6px;overflow:hidden"><div class="t" style="left:2.50px;top:3px;font-size:13.6px;color:#141414;letter-spacing:0.25px;">http:<span class=sl>/</span><span class=sl>/</span>pollen.com</div></div>
<div class="t" style="left:667.00px;top:438.49px;font-size:13.6px;color:#141414;font-weight:normal;">Site</div>
<div class="t" style="right:720.50px;top:438.49px;font-size:13.6px;color:#141414;font-weight:normal;">2</div>
<div class="t" style="right:621.50px;top:438.49px;font-size:13.6px;color:#141414;font-weight:normal;">1</div>
<div class="t" style="right:538.10px;top:438.49px;font-size:13.6px;color:#141414;font-weight:normal;">200%</div>
<div class="t" style="left:1074.40px;top:438.49px;font-size:13.6px;color:#141414;font-weight:normal;">$</div>
<div class="t" style="right:459.50px;top:438.49px;font-size:13.6px;color:#141414;font-weight:normal;">0.96</div>
<div class="t" style="left:1155.50px;top:438.49px;font-size:13.6px;color:#141414;font-weight:normal;">$</div>
<div class="t" style="right:354.30px;top:438.49px;font-size:13.6px;color:#141414;font-weight:normal;">1.92</div>
<div class="t" style="right:260.60px;top:438.49px;font-size:13.6px;color:#141414;font-weight:normal;">-</div>
<div class="t" style="right:177.50px;top:438.49px;font-size:13.6px;color:#141414;font-weight:normal;">-</div>
<div class="t" style="right:76.90px;top:438.49px;font-size:13.6px;color:#141414;font-weight:normal;">0%</div>
<div class="t" style="left:1371.40px;top:438.49px;font-size:13.6px;color:#141414;font-weight:normal;">$</div>
<div style="position:absolute;left:27.50px;top:454.95px;width:244.00px;height:19.6px;overflow:hidden"><div class="t" style="left:3.00px;top:3px;font-size:13.6px;color:#141414;letter-spacing:0.08px;">FunnyPig</div></div>
<div style="position:absolute;left:273.00px;top:454.95px;width:390.00px;height:19.6px;overflow:hidden"><div class="t" style="left:2.50px;top:3px;font-size:13.6px;color:#141414;letter-spacing:0.02px;">http:<span class=sl>/</span><span class=sl>/</span>youtube.com<span class=sl>/</span>channel<span class=sl>/</span>UCWv2oOr-VnM5z7-Eb_NlWfA</div></div>
<div class="t" style="left:667.00px;top:458.55px;font-size:13.6px;color:#141414;font-weight:normal;">YouTube channel</div>
<div class="t" style="right:720.50px;top:458.55px;font-size:13.6px;color:#141414;font-weight:normal;">2</div>
<div class="t" style="right:621.50px;top:458.55px;font-size:13.6px;color:#141414;font-weight:normal;">1</div>
<div class="t" style="right:538.10px;top:458.55px;font-size:13.6px;color:#141414;font-weight:normal;">200%</div>
<div class="t" style="left:1074.40px;top:458.55px;font-size:13.6px;color:#141414;font-weight:normal;">$</div>
<div class="t" style="right:459.50px;top:458.55px;font-size:13.6px;color:#141414;font-weight:normal;">0.92</div>
<div class="t" style="left:1155.50px;top:458.55px;font-size:13.6px;color:#141414;font-weight:normal;">$</div>
<div class="t" style="right:354.30px;top:458.55px;font-size:13.6px;color:#141414;font-weight:normal;">1.84</div>
<div class="t" style="right:260.60px;top:458.55px;font-size:13.6px;color:#141414;font-weight:normal;">-</div>
<div class="t" style="right:177.50px;top:458.55px;font-size:13.6px;color:#141414;font-weight:normal;">-</div>
<div class="t" style="right:76.90px;top:458.55px;font-size:13.6px;color:#141414;font-weight:normal;">0%</div>
<div class="t" style="left:1371.40px;top:458.55px;font-size:13.6px;color:#141414;font-weight:normal;">$</div>
<div style="position:absolute;left:27.50px;top:475.01px;width:244.00px;height:19.6px;overflow:hidden"><div class="t" style="left:3.00px;top:3px;font-size:13.6px;color:#141414;letter-spacing:0.08px;">paylocitylogin.site</div></div>
<div style="position:absolute;left:273.00px;top:475.01px;width:390.00px;height:19.6px;overflow:hidden"><div class="t" style="left:2.50px;top:3px;font-size:13.6px;color:#141414;letter-spacing:0.25px;">http:<span class=sl>/</span><span class=sl>/</span>paylocitylogin.site</div></div>
<div class="t" style="left:667.00px;top:478.61px;font-size:13.6px;color:#141414;font-weight:normal;">Site</div>
<div class="t" style="right:720.50px;top:478.61px;font-size:13.6px;color:#141414;font-weight:normal;">2</div>
<div class="t" style="right:621.50px;top:478.61px;font-size:13.6px;color:#141414;font-weight:normal;">1</div>
<div class="t" style="right:538.10px;top:478.61px;font-size:13.6px;color:#141414;font-weight:normal;">200%</div>
<div class="t" style="left:1074.40px;top:478.61px;font-size:13.6px;color:#141414;font-weight:normal;">$</div>
<div class="t" style="right:459.50px;top:478.61px;font-size:13.6px;color:#141414;font-weight:normal;">0.92</div>
<div class="t" style="left:1155.50px;top:478.61px;font-size:13.6px;color:#141414;font-weight:normal;">$</div>
<div class="t" style="right:354.30px;top:478.61px;font-size:13.6px;color:#141414;font-weight:normal;">1.84</div>
<div class="t" style="right:260.60px;top:478.61px;font-size:13.6px;color:#141414;font-weight:normal;">-</div>
<div class="t" style="right:177.50px;top:478.61px;font-size:13.6px;color:#141414;font-weight:normal;">-</div>
<div class="t" style="right:76.90px;top:478.61px;font-size:13.6px;color:#141414;font-weight:normal;">0%</div>
<div class="t" style="left:1371.40px;top:478.61px;font-size:13.6px;color:#141414;font-weight:normal;">$</div>
<div style="position:absolute;left:27.50px;top:495.07px;width:244.00px;height:19.6px;overflow:hidden"><div class="t" style="left:3.00px;top:3px;font-size:13.6px;color:#141414;letter-spacing:0.08px;">Usher - Topic</div></div>
<div style="position:absolute;left:273.00px;top:495.07px;width:390.00px;height:19.6px;overflow:hidden"><div class="t" style="left:2.50px;top:3px;font-size:13.6px;color:#141414;letter-spacing:0.02px;">http:<span class=sl>/</span><span class=sl>/</span>youtube.com<span class=sl>/</span>channel<span class=sl>/</span>UClLulcqzJMtkxCmftNVjNBQ</div></div>
<div class="t" style="left:667.00px;top:498.67px;font-size:13.6px;color:#141414;font-weight:normal;">YouTube channel</div>
<div class="t" style="right:720.50px;top:498.67px;font-size:13.6px;color:#141414;font-weight:normal;">2</div>
<div class="t" style="right:621.50px;top:498.67px;font-size:13.6px;color:#141414;font-weight:normal;">1</div>
<div class="t" style="right:538.10px;top:498.67px;font-size:13.6px;color:#141414;font-weight:normal;">200%</div>
<div class="t" style="left:1074.40px;top:498.67px;font-size:13.6px;color:#141414;font-weight:normal;">$</div>
<div class="t" style="right:459.50px;top:498.67px;font-size:13.6px;color:#141414;font-weight:normal;">0.91</div>
<div class="t" style="left:1155.50px;top:498.67px;font-size:13.6px;color:#141414;font-weight:normal;">$</div>
<div class="t" style="right:354.30px;top:498.67px;font-size:13.6px;color:#141414;font-weight:normal;">1.82</div>
<div class="t" style="right:260.60px;top:498.67px;font-size:13.6px;color:#141414;font-weight:normal;">-</div>
<div class="t" style="right:177.50px;top:498.67px;font-size:13.6px;color:#141414;font-weight:normal;">-</div>
<div class="t" style="right:76.90px;top:498.67px;font-size:13.6px;color:#141414;font-weight:normal;">0%</div>
<div class="t" style="left:1371.40px;top:498.67px;font-size:13.6px;color:#141414;font-weight:normal;">$</div>
<div style="position:absolute;left:27.50px;top:515.13px;width:244.00px;height:19.6px;overflow:hidden"><div class="t" style="left:3.00px;top:3px;font-size:13.6px;color:#141414;letter-spacing:0.08px;">Dy Ann Parham</div></div>
<div style="position:absolute;left:273.00px;top:515.13px;width:390.00px;height:19.6px;overflow:hidden"><div class="t" style="left:2.50px;top:3px;font-size:13.6px;color:#141414;letter-spacing:0.02px;">http:<span class=sl>/</span><span class=sl>/</span>youtube.com<span class=sl>/</span>channel<span class=sl>/</span>UCtDiUDWA5pg9tHRutnzJGhA</div></div>
<div class="t" style="left:667.00px;top:518.73px;font-size:13.6px;color:#141414;font-weight:normal;">YouTube channel</div>
<div class="t" style="right:720.50px;top:518.73px;font-size:13.6px;color:#141414;font-weight:normal;">2</div>
<div class="t" style="right:621.50px;top:518.73px;font-size:13.6px;color:#141414;font-weight:normal;">1</div>
<div class="t" style="right:538.10px;top:518.73px;font-size:13.6px;color:#141414;font-weight:normal;">200%</div>
<div class="t" style="left:1074.40px;top:518.73px;font-size:13.6px;color:#141414;font-weight:normal;">$</div>
<div class="t" style="right:459.50px;top:518.73px;font-size:13.6px;color:#141414;font-weight:normal;">0.90</div>
<div class="t" style="left:1155.50px;top:518.73px;font-size:13.6px;color:#141414;font-weight:normal;">$</div>
<div class="t" style="right:354.30px;top:518.73px;font-size:13.6px;color:#141414;font-weight:normal;">1.80</div>
<div class="t" style="right:260.60px;top:518.73px;font-size:13.6px;color:#141414;font-weight:normal;">-</div>
<div class="t" style="right:177.50px;top:518.73px;font-size:13.6px;color:#141414;font-weight:normal;">-</div>
<div class="t" style="right:76.90px;top:518.73px;font-size:13.6px;color:#141414;font-weight:normal;">0%</div>
<div class="t" style="left:1371.40px;top:518.73px;font-size:13.6px;color:#141414;font-weight:normal;">$</div>
<div style="position:absolute;left:27.50px;top:535.19px;width:244.00px;height:19.6px;overflow:hidden"><div class="t" style="left:3.00px;top:3px;font-size:13.6px;color:#141414;letter-spacing:0.08px;">Empyriangaming</div></div>
<div style="position:absolute;left:273.00px;top:535.19px;width:390.00px;height:19.6px;overflow:hidden"><div class="t" style="left:2.50px;top:3px;font-size:13.6px;color:#141414;letter-spacing:0.02px;">http:<span class=sl>/</span><span class=sl>/</span>youtube.com<span class=sl>/</span>channel<span class=sl>/</span>UCx6GR83AbXiSX2gesCxSPPw</div></div>
<div class="t" style="left:667.00px;top:538.79px;font-size:13.6px;color:#141414;font-weight:normal;">YouTube channel</div>
<div class="t" style="right:720.50px;top:538.79px;font-size:13.6px;color:#141414;font-weight:normal;">2</div>
<div class="t" style="right:621.50px;top:538.79px;font-size:13.6px;color:#141414;font-weight:normal;">1</div>
<div class="t" style="right:538.10px;top:538.79px;font-size:13.6px;color:#141414;font-weight:normal;">200%</div>
<div class="t" style="left:1074.40px;top:538.79px;font-size:13.6px;color:#141414;font-weight:normal;">$</div>
<div class="t" style="right:459.50px;top:538.79px;font-size:13.6px;color:#141414;font-weight:normal;">0.85</div>
<div class="t" style="left:1155.50px;top:538.79px;font-size:13.6px;color:#141414;font-weight:normal;">$</div>
<div class="t" style="right:354.30px;top:538.79px;font-size:13.6px;color:#141414;font-weight:normal;">1.70</div>
<div class="t" style="right:260.60px;top:538.79px;font-size:13.6px;color:#141414;font-weight:normal;">-</div>
<div class="t" style="right:177.50px;top:538.79px;font-size:13.6px;color:#141414;font-weight:normal;">-</div>
<div class="t" style="right:76.90px;top:538.79px;font-size:13.6px;color:#141414;font-weight:normal;">0%</div>
<div class="t" style="left:1371.40px;top:538.79px;font-size:13.6px;color:#141414;font-weight:normal;">$</div>
<div style="position:absolute;left:27.50px;top:555.25px;width:244.00px;height:19.6px;overflow:hidden"><div class="t" style="left:3.00px;top:3px;font-size:13.6px;color:#141414;letter-spacing:0.08px;">routerunlock.com</div></div>
<div style="position:absolute;left:273.00px;top:555.25px;width:390.00px;height:19.6px;overflow:hidden"><div class="t" style="left:2.50px;top:3px;font-size:13.6px;color:#141414;letter-spacing:0.25px;">http:<span class=sl>/</span><span class=sl>/</span>routerunlock.com</div></div>
<div class="t" style="left:667.00px;top:558.85px;font-size:13.6px;color:#141414;font-weight:normal;">Site</div>
<div class="t" style="right:720.50px;top:558.85px;font-size:13.6px;color:#141414;font-weight:normal;">2</div>
<div class="t" style="right:621.50px;top:558.85px;font-size:13.6px;color:#141414;font-weight:normal;">1</div>
<div class="t" style="right:538.10px;top:558.85px;font-size:13.6px;color:#141414;font-weight:normal;">200%</div>
<div class="t" style="left:1074.40px;top:558.85px;font-size:13.6px;color:#141414;font-weight:normal;">$</div>
<div class="t" style="right:459.50px;top:558.85px;font-size:13.6px;color:#141414;font-weight:normal;">0.83</div>
<div class="t" style="left:1155.50px;top:558.85px;font-size:13.6px;color:#141414;font-weight:normal;">$</div>
<div class="t" style="right:354.30px;top:558.85px;font-size:13.6px;color:#141414;font-weight:normal;">1.66</div>
<div class="t" style="right:260.60px;top:558.85px;font-size:13.6px;color:#141414;font-weight:normal;">-</div>
<div class="t" style="right:177.50px;top:558.85px;font-size:13.6px;color:#141414;font-weight:normal;">-</div>
<div class="t" style="right:76.90px;top:558.85px;font-size:13.6px;color:#141414;font-weight:normal;">0%</div>
<div class="t" style="left:1371.40px;top:558.85px;font-size:13.6px;color:#141414;font-weight:normal;">$</div>
<div style="position:absolute;left:27.50px;top:575.31px;width:244.00px;height:19.6px;overflow:hidden"><div class="t" style="left:3.00px;top:3px;font-size:13.6px;color:#141414;letter-spacing:0.08px;">Nurse Liz</div></div>
<div style="position:absolute;left:273.00px;top:575.31px;width:390.00px;height:19.6px;overflow:hidden"><div class="t" style="left:2.50px;top:3px;font-size:13.6px;color:#141414;letter-spacing:0.02px;">http:<span class=sl>/</span><span class=sl>/</span>youtube.com<span class=sl>/</span>channel<span class=sl>/</span>UCkTsYr9gB40oMr6GDiDsL0Q</div></div>
<div class="t" style="left:667.00px;top:578.91px;font-size:13.6px;color:#141414;font-weight:normal;">YouTube channel</div>
<div class="t" style="right:720.50px;top:578.91px;font-size:13.6px;color:#141414;font-weight:normal;">2</div>
<div class="t" style="right:621.50px;top:578.91px;font-size:13.6px;color:#141414;font-weight:normal;">1</div>
<div class="t" style="right:538.10px;top:578.91px;font-size:13.6px;color:#141414;font-weight:normal;">200%</div>
<div class="t" style="left:1074.40px;top:578.91px;font-size:13.6px;color:#141414;font-weight:normal;">$</div>
<div class="t" style="right:459.50px;top:578.91px;font-size:13.6px;color:#141414;font-weight:normal;">0.82</div>
<div class="t" style="left:1155.50px;top:578.91px;font-size:13.6px;color:#141414;font-weight:normal;">$</div>
<div class="t" style="right:354.30px;top:578.91px;font-size:13.6px;color:#141414;font-weight:normal;">1.64</div>
<div class="t" style="right:260.60px;top:578.91px;font-size:13.6px;color:#141414;font-weight:normal;">-</div>
<div class="t" style="right:177.50px;top:578.91px;font-size:13.6px;color:#141414;font-weight:normal;">-</div>
<div class="t" style="right:76.90px;top:578.91px;font-size:13.6px;color:#141414;font-weight:normal;">0%</div>
<div class="t" style="left:1371.40px;top:578.91px;font-size:13.6px;color:#141414;font-weight:normal;">$</div>
<div style="position:absolute;left:27.50px;top:595.37px;width:244.00px;height:19.6px;overflow:hidden"><div class="t" style="left:3.00px;top:3px;font-size:13.6px;color:#141414;letter-spacing:0.08px;">thechinesezodiac.org</div></div>
<div style="position:absolute;left:273.00px;top:595.37px;width:390.00px;height:19.6px;overflow:hidden"><div class="t" style="left:2.50px;top:3px;font-size:13.6px;color:#141414;letter-spacing:0.25px;">http:<span class=sl>/</span><span class=sl>/</span>thechinesezodiac.org</div></div>
<div class="t" style="left:667.00px;top:598.97px;font-size:13.6px;color:#141414;font-weight:normal;">Site</div>
<div class="t" style="right:720.50px;top:598.97px;font-size:13.6px;color:#141414;font-weight:normal;">2</div>
<div class="t" style="right:621.50px;top:598.97px;font-size:13.6px;color:#141414;font-weight:normal;">1</div>
<div class="t" style="right:538.10px;top:598.97px;font-size:13.6px;color:#141414;font-weight:normal;">200%</div>
<div class="t" style="left:1074.40px;top:598.97px;font-size:13.6px;color:#141414;font-weight:normal;">$</div>
<div class="t" style="right:459.50px;top:598.97px;font-size:13.6px;color:#141414;font-weight:normal;">0.81</div>
<div class="t" style="left:1155.50px;top:598.97px;font-size:13.6px;color:#141414;font-weight:normal;">$</div>
<div class="t" style="right:354.30px;top:598.97px;font-size:13.6px;color:#141414;font-weight:normal;">1.62</div>
<div class="t" style="right:260.60px;top:598.97px;font-size:13.6px;color:#141414;font-weight:normal;">-</div>
<div class="t" style="right:177.50px;top:598.97px;font-size:13.6px;color:#141414;font-weight:normal;">-</div>
<div class="t" style="right:76.90px;top:598.97px;font-size:13.6px;color:#141414;font-weight:normal;">0%</div>
<div class="t" style="left:1371.40px;top:598.97px;font-size:13.6px;color:#141414;font-weight:normal;">$</div>
<div style="position:absolute;left:27.50px;top:615.43px;width:244.00px;height:19.6px;overflow:hidden"><div class="t" style="left:3.00px;top:3px;font-size:13.6px;color:#141414;letter-spacing:0.08px;">marlonsv.com</div></div>
<div style="position:absolute;left:273.00px;top:615.43px;width:390.00px;height:19.6px;overflow:hidden"><div class="t" style="left:2.50px;top:3px;font-size:13.6px;color:#141414;letter-spacing:0.25px;">http:<span class=sl>/</span><span class=sl>/</span>marlonsv.com</div></div>
<div class="t" style="left:667.00px;top:619.03px;font-size:13.6px;color:#141414;font-weight:normal;">Site</div>
<div class="t" style="right:720.50px;top:619.03px;font-size:13.6px;color:#141414;font-weight:normal;">2</div>
<div class="t" style="right:621.50px;top:619.03px;font-size:13.6px;color:#141414;font-weight:normal;">1</div>
<div class="t" style="right:538.10px;top:619.03px;font-size:13.6px;color:#141414;font-weight:normal;">200%</div>
<div class="t" style="left:1074.40px;top:619.03px;font-size:13.6px;color:#141414;font-weight:normal;">$</div>
<div class="t" style="right:459.50px;top:619.03px;font-size:13.6px;color:#141414;font-weight:normal;">0.79</div>
<div class="t" style="left:1155.50px;top:619.03px;font-size:13.6px;color:#141414;font-weight:normal;">$</div>
<div class="t" style="right:354.30px;top:619.03px;font-size:13.6px;color:#141414;font-weight:normal;">1.58</div>
<div class="t" style="right:260.60px;top:619.03px;font-size:13.6px;color:#141414;font-weight:normal;">-</div>
<div class="t" style="right:177.50px;top:619.03px;font-size:13.6px;color:#141414;font-weight:normal;">-</div>
<div class="t" style="right:76.90px;top:619.03px;font-size:13.6px;color:#141414;font-weight:normal;">0%</div>
<div class="t" style="left:1371.40px;top:619.03px;font-size:13.6px;color:#141414;font-weight:normal;">$</div>
<div style="position:absolute;left:27.50px;top:635.49px;width:244.00px;height:19.6px;overflow:hidden"><div class="t" style="left:3.00px;top:3px;font-size:13.6px;color:#141414;letter-spacing:0.08px;">print-ables.com</div></div>
<div style="position:absolute;left:273.00px;top:635.49px;width:390.00px;height:19.6px;overflow:hidden"><div class="t" style="left:2.50px;top:3px;font-size:13.6px;color:#141414;letter-spacing:0.25px;">http:<span class=sl>/</span><span class=sl>/</span>print-ables.com</div></div>
<div class="t" style="left:667.00px;top:639.09px;font-size:13.6px;color:#141414;font-weight:normal;">Site</div>
<div class="t" style="right:720.50px;top:639.09px;font-size:13.6px;color:#141414;font-weight:normal;">2</div>
<div class="t" style="right:621.50px;top:639.09px;font-size:13.6px;color:#141414;font-weight:normal;">1</div>
<div class="t" style="right:538.10px;top:639.09px;font-size:13.6px;color:#141414;font-weight:normal;">200%</div>
<div class="t" style="left:1074.40px;top:639.09px;font-size:13.6px;color:#141414;font-weight:normal;">$</div>
<div class="t" style="right:459.50px;top:639.09px;font-size:13.6px;color:#141414;font-weight:normal;">0.76</div>
<div class="t" style="left:1155.50px;top:639.09px;font-size:13.6px;color:#141414;font-weight:normal;">$</div>
<div class="t" style="right:354.30px;top:639.09px;font-size:13.6px;color:#141414;font-weight:normal;">1.52</div>
<div class="t" style="right:260.60px;top:639.09px;font-size:13.6px;color:#141414;font-weight:normal;">-</div>
<div class="t" style="right:177.50px;top:639.09px;font-size:13.6px;color:#141414;font-weight:normal;">-</div>
<div class="t" style="right:76.90px;top:639.09px;font-size:13.6px;color:#141414;font-weight:normal;">0%</div>
<div class="t" style="left:1371.40px;top:639.09px;font-size:13.6px;color:#141414;font-weight:normal;">$</div>
<div style="position:absolute;left:27.50px;top:655.55px;width:244.00px;height:19.6px;overflow:hidden"><div class="t" style="left:3.00px;top:3px;font-size:13.6px;color:#141414;letter-spacing:0.08px;">lgflashtool.com</div></div>
<div style="position:absolute;left:273.00px;top:655.55px;width:390.00px;height:19.6px;overflow:hidden"><div class="t" style="left:2.50px;top:3px;font-size:13.6px;color:#141414;letter-spacing:0.25px;">http:<span class=sl>/</span><span class=sl>/</span>lgflashtool.com</div></div>
<div class="t" style="left:667.00px;top:659.15px;font-size:13.6px;color:#141414;font-weight:normal;">Site</div>
<div class="t" style="right:720.50px;top:659.15px;font-size:13.6px;color:#141414;font-weight:normal;">2</div>
<div class="t" style="right:621.50px;top:659.15px;font-size:13.6px;color:#141414;font-weight:normal;">1</div>
<div class="t" style="right:538.10px;top:659.15px;font-size:13.6px;color:#141414;font-weight:normal;">200%</div>
<div class="t" style="left:1074.40px;top:659.15px;font-size:13.6px;color:#141414;font-weight:normal;">$</div>
<div class="t" style="right:459.50px;top:659.15px;font-size:13.6px;color:#141414;font-weight:normal;">0.74</div>
<div class="t" style="left:1155.50px;top:659.15px;font-size:13.6px;color:#141414;font-weight:normal;">$</div>
<div class="t" style="right:354.30px;top:659.15px;font-size:13.6px;color:#141414;font-weight:normal;">1.48</div>
<div class="t" style="right:260.60px;top:659.15px;font-size:13.6px;color:#141414;font-weight:normal;">-</div>
<div class="t" style="right:177.50px;top:659.15px;font-size:13.6px;color:#141414;font-weight:normal;">-</div>
<div class="t" style="right:76.90px;top:659.15px;font-size:13.6px;color:#141414;font-weight:normal;">0%</div>
<div class="t" style="left:1371.40px;top:659.15px;font-size:13.6px;color:#141414;font-weight:normal;">$</div>
<div style="position:absolute;left:27.50px;top:675.61px;width:244.00px;height:19.6px;overflow:hidden"><div class="t" style="left:3.00px;top:3px;font-size:13.6px;color:#141414;letter-spacing:0.08px;">casinhaarrumada.com</div></div>
<div style="position:absolute;left:273.00px;top:675.61px;width:390.00px;height:19.6px;overflow:hidden"><div class="t" style="left:2.50px;top:3px;font-size:13.6px;color:#141414;letter-spacing:0.25px;">http:<span class=sl>/</span><span class=sl>/</span>casinhaarrumada.com</div></div>
<div class="t" style="left:667.00px;top:679.21px;font-size:13.6px;color:#141414;font-weight:normal;">Site</div>
<div class="t" style="right:720.50px;top:679.21px;font-size:13.6px;color:#141414;font-weight:normal;">2</div>
<div class="t" style="right:621.50px;top:679.21px;font-size:13.6px;color:#141414;font-weight:normal;">1</div>
<div class="t" style="right:538.10px;top:679.21px;font-size:13.6px;color:#141414;font-weight:normal;">200%</div>
<div class="t" style="left:1074.40px;top:679.21px;font-size:13.6px;color:#141414;font-weight:normal;">$</div>
<div class="t" style="right:459.50px;top:679.21px;font-size:13.6px;color:#141414;font-weight:normal;">0.63</div>
<div class="t" style="left:1155.50px;top:679.21px;font-size:13.6px;color:#141414;font-weight:normal;">$</div>
<div class="t" style="right:354.30px;top:679.21px;font-size:13.6px;color:#141414;font-weight:normal;">1.26</div>
<div class="t" style="right:260.60px;top:679.21px;font-size:13.6px;color:#141414;font-weight:normal;">-</div>
<div class="t" style="right:177.50px;top:679.21px;font-size:13.6px;color:#141414;font-weight:normal;">-</div>
<div class="t" style="right:76.90px;top:679.21px;font-size:13.6px;color:#141414;font-weight:normal;">0%</div>
<div class="t" style="left:1371.40px;top:679.21px;font-size:13.6px;color:#141414;font-weight:normal;">$</div>
<div style="position:absolute;left:27.50px;top:695.67px;width:244.00px;height:19.6px;overflow:hidden"><div class="t" style="left:3.00px;top:3px;font-size:13.6px;color:#141414;letter-spacing:0.08px;">kodidownloadz.com</div></div>
<div style="position:absolute;left:273.00px;top:695.67px;width:390.00px;height:19.6px;overflow:hidden"><div class="t" style="left:2.50px;top:3px;font-size:13.6px;color:#141414;letter-spacing:0.25px;">http:<span class=sl>/</span><span class=sl>/</span>kodidownloadz.com</div></div>
<div class="t" style="left:667.00px;top:699.27px;font-size:13.6px;color:#141414;font-weight:normal;">Site</div>
<div class="t" style="right:720.50px;top:699.27px;font-size:13.6px;color:#141414;font-weight:normal;">2</div>
<div class="t" style="right:621.50px;top:699.27px;font-size:13.6px;color:#141414;font-weight:normal;">1</div>
<div class="t" style="right:538.10px;top:699.27px;font-size:13.6px;color:#141414;font-weight:normal;">200%</div>
<div class="t" style="left:1074.40px;top:699.27px;font-size:13.6px;color:#141414;font-weight:normal;">$</div>
<div class="t" style="right:459.50px;top:699.27px;font-size:13.6px;color:#141414;font-weight:normal;">0.63</div>
<div class="t" style="left:1155.50px;top:699.27px;font-size:13.6px;color:#141414;font-weight:normal;">$</div>
<div class="t" style="right:354.30px;top:699.27px;font-size:13.6px;color:#141414;font-weight:normal;">1.26</div>
<div class="t" style="right:260.60px;top:699.27px;font-size:13.6px;color:#141414;font-weight:normal;">-</div>
<div class="t" style="right:177.50px;top:699.27px;font-size:13.6px;color:#141414;font-weight:normal;">-</div>
<div class="t" style="right:76.90px;top:699.27px;font-size:13.6px;color:#141414;font-weight:normal;">0%</div>
<div class="t" style="left:1371.40px;top:699.27px;font-size:13.6px;color:#141414;font-weight:normal;">$</div>
<div style="position:absolute;left:27.50px;top:715.73px;width:244.00px;height:19.6px;overflow:hidden"><div class="t" style="left:3.00px;top:3px;font-size:13.6px;color:#141414;letter-spacing:0.08px;">Mobile App: My Talking Tom (Google Pl</div></div>
<div style="position:absolute;left:273.00px;top:715.73px;width:390.00px;height:19.6px;overflow:hidden"><div class="t" style="left:2.50px;top:3px;font-size:13.6px;color:#141414;letter-spacing:0.25px;">https:<span class=sl>/</span><span class=sl>/</span>play.google.com<span class=sl>/</span>store<span class=sl>/</span>apps<span class=sl>/</span>details?id=com.outfit7.my</div></div>
<div class="t" style="left:667.00px;top:719.33px;font-size:13.6px;color:#141414;font-weight:normal;">Mobile application</div>
<div class="t" style="right:720.50px;top:719.33px;font-size:13.6px;color:#141414;font-weight:normal;">2</div>
<div class="t" style="right:621.50px;top:719.33px;font-size:13.6px;color:#141414;font-weight:normal;">1</div>
<div class="t" style="right:538.10px;top:719.33px;font-size:13.6px;color:#141414;font-weight:normal;">200%</div>
<div class="t" style="left:1074.40px;top:719.33px;font-size:13.6px;color:#141414;font-weight:normal;">$</div>
<div class="t" style="right:459.50px;top:719.33px;font-size:13.6px;color:#141414;font-weight:normal;">0.63</div>
<div class="t" style="left:1155.50px;top:719.33px;font-size:13.6px;color:#141414;font-weight:normal;">$</div>
<div class="t" style="right:354.30px;top:719.33px;font-size:13.6px;color:#141414;font-weight:normal;">1.25</div>
<div class="t" style="right:260.60px;top:719.33px;font-size:13.6px;color:#141414;font-weight:normal;">-</div>
<div class="t" style="right:177.50px;top:719.33px;font-size:13.6px;color:#141414;font-weight:normal;">-</div>
<div class="t" style="right:76.90px;top:719.33px;font-size:13.6px;color:#141414;font-weight:normal;">0%</div>
<div class="t" style="left:1371.40px;top:719.33px;font-size:13.6px;color:#141414;font-weight:normal;">$</div>
<div style="position:absolute;left:27.50px;top:735.79px;width:244.00px;height:19.6px;overflow:hidden"><div class="t" style="left:3.00px;top:3px;font-size:13.6px;color:#141414;letter-spacing:0.08px;">askmenumber.com</div></div>
<div style="position:absolute;left:273.00px;top:735.79px;width:390.00px;height:19.6px;overflow:hidden"><div class="t" style="left:2.50px;top:3px;font-size:13.6px;color:#141414;letter-spacing:0.25px;">http:<span class=sl>/</span><span class=sl>/</span>askmenumber.com</div></div>
<div class="t" style="left:667.00px;top:739.39px;font-size:13.6px;color:#141414;font-weight:normal;">Site</div>
<div class="t" style="right:720.50px;top:739.39px;font-size:13.6px;color:#141414;font-weight:normal;">2</div>
<div class="t" style="right:621.50px;top:739.39px;font-size:13.6px;color:#141414;font-weight:normal;">1</div>
<div class="t" style="right:538.10px;top:739.39px;font-size:13.6px;color:#141414;font-weight:normal;">200%</div>
<div class="t" style="left:1074.40px;top:739.39px;font-size:13.6px;color:#141414;font-weight:normal;">$</div>
<div class="t" style="right:459.50px;top:739.39px;font-size:13.6px;color:#141414;font-weight:normal;">0.60</div>
<div class="t" style="left:1155.50px;top:739.39px;font-size:13.6px;color:#141414;font-weight:normal;">$</div>
<div class="t" style="right:354.30px;top:739.39px;font-size:13.6px;color:#141414;font-weight:normal;">1.20</div>
<div class="t" style="right:260.60px;top:739.39px;font-size:13.6px;color:#141414;font-weight:normal;">-</div>
<div class="t" style="right:177.50px;top:739.39px;font-size:13.6px;color:#141414;font-weight:normal;">-</div>
<div class="t" style="right:76.90px;top:739.39px;font-size:13.6px;color:#141414;font-weight:normal;">0%</div>
<div class="t" style="left:1371.40px;top:739.39px;font-size:13.6px;color:#141414;font-weight:normal;">$</div>
<div style="position:absolute;left:27.50px;top:755.85px;width:244.00px;height:19.6px;overflow:hidden"><div class="t" style="left:3.00px;top:3px;font-size:13.6px;color:#141414;letter-spacing:0.08px;">digirev.us</div></div>
<div style="position:absolute;left:273.00px;top:755.85px;width:390.00px;height:19.6px;overflow:hidden"><div class="t" style="left:2.50px;top:3px;font-size:13.6px;color:#141414;letter-spacing:0.25px;">http:<span class=sl>/</span><span class=sl>/</span>digirev.us</div></div>
<div class="t" style="left:667.00px;top:759.45px;font-size:13.6px;color:#141414;font-weight:normal;">Site</div>
<div class="t" style="right:720.50px;top:759.45px;font-size:13.6px;color:#141414;font-weight:normal;">2</div>
<div class="t" style="right:621.50px;top:759.45px;font-size:13.6px;color:#141414;font-weight:normal;">1</div>
<div class="t" style="right:538.10px;top:759.45px;font-size:13.6px;color:#141414;font-weight:normal;">200%</div>
<div class="t" style="left:1074.40px;top:759.45px;font-size:13.6px;color:#141414;font-weight:normal;">$</div>
<div class="t" style="right:459.50px;top:759.45px;font-size:13.6px;color:#141414;font-weight:normal;">0.60</div>
<div class="t" style="left:1155.50px;top:759.45px;font-size:13.6px;color:#141414;font-weight:normal;">$</div>
<div class="t" style="right:354.30px;top:759.45px;font-size:13.6px;color:#141414;font-weight:normal;">1.20</div>
<div class="t" style="right:260.60px;top:759.45px;font-size:13.6px;color:#141414;font-weight:normal;">-</div>
<div class="t" style="right:177.50px;top:759.45px;font-size:13.6px;color:#141414;font-weight:normal;">-</div>
<div class="t" style="right:76.90px;top:759.45px;font-size:13.6px;color:#141414;font-weight:normal;">0%</div>
<div class="t" style="left:1371.40px;top:759.45px;font-size:13.6px;color:#141414;font-weight:normal;">$</div>
<div style="position:absolute;left:27.50px;top:775.91px;width:244.00px;height:19.6px;overflow:hidden"><div class="t" style="left:3.00px;top:3px;font-size:13.6px;color:#141414;letter-spacing:0.08px;">calculatoredge.com</div></div>
<div style="position:absolute;left:273.00px;top:775.91px;width:390.00px;height:19.6px;overflow:hidden"><div class="t" style="left:2.50px;top:3px;font-size:13.6px;color:#141414;letter-spacing:0.25px;">http:<span class=sl>/</span><span class=sl>/</span>calculatoredge.com</div></div>
<div class="t" style="left:667.00px;top:779.51px;font-size:13.6px;color:#141414;font-weight:normal;">Site</div>
<div class="t" style="right:720.50px;top:779.51px;font-size:13.6px;color:#141414;font-weight:normal;">2</div>
<div class="t" style="right:621.50px;top:779.51px;font-size:13.6px;color:#141414;font-weight:normal;">1</div>
<div class="t" style="right:538.10px;top:779.51px;font-size:13.6px;color:#141414;font-weight:normal;">200%</div>
<div class="t" style="left:1074.40px;top:779.51px;font-size:13.6px;color:#141414;font-weight:normal;">$</div>
<div class="t" style="right:459.50px;top:779.51px;font-size:13.6px;color:#141414;font-weight:normal;">0.57</div>
<div class="t" style="left:1155.50px;top:779.51px;font-size:13.6px;color:#141414;font-weight:normal;">$</div>
<div class="t" style="right:354.30px;top:779.51px;font-size:13.6px;color:#141414;font-weight:normal;">1.14</div>
<div class="t" style="right:260.60px;top:779.51px;font-size:13.6px;color:#141414;font-weight:normal;">-</div>
<div class="t" style="right:177.50px;top:779.51px;font-size:13.6px;color:#141414;font-weight:normal;">-</div>
<div class="t" style="right:76.90px;top:779.51px;font-size:13.6px;color:#141414;font-weight:normal;">0%</div>
<div class="t" style="left:1371.40px;top:779.51px;font-size:13.6px;color:#141414;font-weight:normal;">$</div>
<div style="position:absolute;left:27.50px;top:795.97px;width:244.00px;height:19.6px;overflow:hidden"><div class="t" style="left:3.00px;top:3px;font-size:13.6px;color:#141414;letter-spacing:0.08px;">uptonic.info</div></div>
<div style="position:absolute;left:273.00px;top:795.97px;width:390.00px;height:19.6px;overflow:hidden"><div class="t" style="left:2.50px;top:3px;font-size:13.6px;color:#141414;letter-spacing:0.25px;">http:<span class=sl>/</span><span class=sl>/</span>uptonic.info</div></div>
<div class="t" style="left:667.00px;top:799.57px;font-size:13.6px;color:#141414;font-weight:normal;">Site</div>
<div class="t" style="right:720.50px;top:799.57px;font-size:13.6px;color:#141414;font-weight:normal;">2</div>
<div class="t" style="right:621.50px;top:799.57px;font-size:13.6px;color:#141414;font-weight:normal;">1</div>
<div class="t" style="right:538.10px;top:799.57px;font-size:13.6px;color:#141414;font-weight:normal;">200%</div>
<div class="t" style="left:1074.40px;top:799.57px;font-size:13.6px;color:#141414;font-weight:normal;">$</div>
<div class="t" style="right:459.50px;top:799.57px;font-size:13.6px;color:#141414;font-weight:normal;">0.56</div>
<div class="t" style="left:1155.50px;top:799.57px;font-size:13.6px;color:#141414;font-weight:normal;">$</div>
<div class="t" style="right:354.30px;top:799.57px;font-size:13.6px;color:#141414;font-weight:normal;">1.11</div>
<div class="t" style="right:260.60px;top:799.57px;font-size:13.6px;color:#141414;font-weight:normal;">-</div>
<div class="t" style="right:177.50px;top:799.57px;font-size:13.6px;color:#141414;font-weight:normal;">-</div>
<div class="t" style="right:76.90px;top:799.57px;font-size:13.6px;color:#141414;font-weight:normal;">0%</div>
<div class="t" style="left:1371.40px;top:799.57px;font-size:13.6px;color:#141414;font-weight:normal;">$</div>
<div style="position:absolute;left:27.50px;top:816.03px;width:244.00px;height:19.6px;overflow:hidden"><div class="t" style="left:3.00px;top:3px;font-size:13.6px;color:#141414;letter-spacing:0.08px;">rswebsols.com</div></div>
<div style="position:absolute;left:273.00px;top:816.03px;width:390.00px;height:19.6px;overflow:hidden"><div class="t" style="left:2.50px;top:3px;font-size:13.6px;color:#141414;letter-spacing:0.25px;">http:<span class=sl>/</span><span class=sl>/</span>rswebsols.com</div></div>
<div class="t" style="left:667.00px;top:819.63px;font-size:13.6px;color:#141414;font-weight:normal;">Site</div>
<div class="t" style="right:720.50px;top:819.63px;font-size:13.6px;color:#141414;font-weight:normal;">2</div>
<div class="t" style="right:621.50px;top:819.63px;font-size:13.6px;color:#141414;font-weight:normal;">1</div>
<div class="t" style="right:538.10px;top:819.63px;font-size:13.6px;color:#141414;font-weight:normal;">200%</div>
<div class="t" style="left:1074.40px;top:819.63px;font-size:13.6px;color:#141414;font-weight:normal;">$</div>
<div class="t" style="right:459.50px;top:819.63px;font-size:13.6px;color:#141414;font-weight:normal;">0.54</div>
<div class="t" style="left:1155.50px;top:819.63px;font-size:13.6px;color:#141414;font-weight:normal;">$</div>
<div class="t" style="right:354.30px;top:819.63px;font-size:13.6px;color:#141414;font-weight:normal;">1.08</div>
<div class="t" style="right:260.60px;top:819.63px;font-size:13.6px;color:#141414;font-weight:normal;">-</div>
<div class="t" style="right:177.50px;top:819.63px;font-size:13.6px;color:#141414;font-weight:normal;">-</div>
<div class="t" style="right:76.90px;top:819.63px;font-size:13.6px;color:#141414;font-weight:normal;">0%</div>
<div class="t" style="left:1371.40px;top:819.63px;font-size:13.6px;color:#141414;font-weight:normal;">$</div>
<div style="position:absolute;left:27.50px;top:836.09px;width:244.00px;height:19.6px;overflow:hidden"><div class="t" style="left:3.00px;top:3px;font-size:13.6px;color:#141414;letter-spacing:0.08px;">The Restoration Couple</div></div>
<div style="position:absolute;left:273.00px;top:836.09px;width:390.00px;height:19.6px;overflow:hidden"><div class="t" style="left:2.50px;top:3px;font-size:13.6px;color:#141414;letter-spacing:0.02px;">http:<span class=sl>/</span><span class=sl>/</span>youtube.com<span class=sl>/</span>channel<span class=sl>/</span>UCQQonXRE7eXIdKIH9fqFkCw</div></div>
<div class="t" style="left:667.00px;top:839.69px;font-size:13.6px;color:#141414;font-weight:normal;">YouTube channel</div>
<div class="t" style="right:720.50px;top:839.69px;font-size:13.6px;color:#141414;font-weight:normal;">2</div>
<div class="t" style="right:621.50px;top:839.69px;font-size:13.6px;color:#141414;font-weight:normal;">1</div>
<div class="t" style="right:538.10px;top:839.69px;font-size:13.6px;color:#141414;font-weight:normal;">200%</div>
<div class="t" style="left:1074.40px;top:839.69px;font-size:13.6px;color:#141414;font-weight:normal;">$</div>
<div class="t" style="right:459.50px;top:839.69px;font-size:13.6px;color:#141414;font-weight:normal;">0.52</div>
<div class="t" style="left:1155.50px;top:839.69px;font-size:13.6px;color:#141414;font-weight:normal;">$</div>
<div class="t" style="right:354.30px;top:839.69px;font-size:13.6px;color:#141414;font-weight:normal;">1.04</div>
<div class="t" style="right:260.60px;top:839.69px;font-size:13.6px;color:#141414;font-weight:normal;">-</div>
<div class="t" style="right:177.50px;top:839.69px;font-size:13.6px;color:#141414;font-weight:normal;">-</div>
<div class="t" style="right:76.90px;top:839.69px;font-size:13.6px;color:#141414;font-weight:normal;">0%</div>
<div class="t" style="left:1371.40px;top:839.69px;font-size:13.6px;color:#141414;font-weight:normal;">$</div>
<div style="position:absolute;left:27.50px;top:856.15px;width:244.00px;height:19.6px;overflow:hidden"><div class="t" style="left:3.00px;top:3px;font-size:13.6px;color:#141414;letter-spacing:0.08px;">toploginzone.com</div></div>
<div style="position:absolute;left:273.00px;top:856.15px;width:390.00px;height:19.6px;overflow:hidden"><div class="t" style="left:2.50px;top:3px;font-size:13.6px;color:#141414;letter-spacing:0.25px;">http:<span class=sl>/</span><span class=sl>/</span>toploginzone.com</div></div>
<div class="t" style="left:667.00px;top:859.75px;font-size:13.6px;color:#141414;font-weight:normal;">Site</div>
<div class="t" style="right:720.50px;top:859.75px;font-size:13.6px;color:#141414;font-weight:normal;">2</div>
<div class="t" style="right:621.50px;top:859.75px;font-size:13.6px;color:#141414;font-weight:normal;">1</div>
<div class="t" style="right:538.10px;top:859.75px;font-size:13.6px;color:#141414;font-weight:normal;">200%</div>
<div class="t" style="left:1074.40px;top:859.75px;font-size:13.6px;color:#141414;font-weight:normal;">$</div>
<div class="t" style="right:459.50px;top:859.75px;font-size:13.6px;color:#141414;font-weight:normal;">0.51</div>
<div class="t" style="left:1155.50px;top:859.75px;font-size:13.6px;color:#141414;font-weight:normal;">$</div>
<div class="t" style="right:354.30px;top:859.75px;font-size:13.6px;color:#141414;font-weight:normal;">1.02</div>
<div class="t" style="right:260.60px;top:859.75px;font-size:13.6px;color:#141414;font-weight:normal;">-</div>
<div class="t" style="right:177.50px;top:859.75px;font-size:13.6px;color:#141414;font-weight:normal;">-</div>
<div class="t" style="right:76.90px;top:859.75px;font-size:13.6px;color:#141414;font-weight:normal;">0%</div>
<div class="t" style="left:1371.40px;top:859.75px;font-size:13.6px;color:#141414;font-weight:normal;">$</div>
<div style="position:absolute;left:27.50px;top:876.21px;width:244.00px;height:19.6px;overflow:hidden"><div class="t" style="left:3.00px;top:3px;font-size:13.6px;color:#141414;letter-spacing:0.08px;">dosgamesarchive.com</div></div>
<div style="position:absolute;left:273.00px;top:876.21px;width:390.00px;height:19.6px;overflow:hidden"><div class="t" style="left:2.50px;top:3px;font-size:13.6px;color:#141414;letter-spacing:0.25px;">http:<span class=sl>/</span><span class=sl>/</span>dosgamesarchive.com</div></div>
<div class="t" style="left:667.00px;top:879.81px;font-size:13.6px;color:#141414;font-weight:normal;">Site</div>
<div class="t" style="right:720.50px;top:879.81px;font-size:13.6px;color:#141414;font-weight:normal;">2</div>
<div class="t" style="right:621.50px;top:879.81px;font-size:13.6px;color:#141414;font-weight:normal;">1</div>
<div class="t" style="right:538.10px;top:879.81px;font-size:13.6px;color:#141414;font-weight:normal;">200%</div>
<div class="t" style="left:1074.40px;top:879.81px;font-size:13.6px;color:#141414;font-weight:normal;">$</div>
<div class="t" style="right:459.50px;top:879.81px;font-size:13.6px;color:#141414;font-weight:normal;">0.50</div>
<div class="t" style="left:1155.50px;top:879.81px;font-size:13.6px;color:#141414;font-weight:normal;">$</div>
<div class="t" style="right:354.30px;top:879.81px;font-size:13.6px;color:#141414;font-weight:normal;">1.00</div>
<div class="t" style="right:260.60px;top:879.81px;font-size:13.6px;color:#141414;font-weight:normal;">-</div>
<div class="t" style="right:177.50px;top:879.81px;font-size:13.6px;color:#141414;font-weight:normal;">-</div>
<div class="t" style="right:76.90px;top:879.81px;font-size:13.6px;color:#141414;font-weight:normal;">0%</div>
<div class="t" style="left:1371.40px;top:879.81px;font-size:13.6px;color:#141414;font-weight:normal;">$</div>
<div style="position:absolute;left:27.50px;top:896.27px;width:244.00px;height:19.6px;overflow:hidden"><div class="t" style="left:3.00px;top:3px;font-size:13.6px;color:#141414;letter-spacing:0.08px;">rankinstudio</div></div>
<div style="position:absolute;left:273.00px;top:896.27px;width:390.00px;height:19.6px;overflow:hidden"><div class="t" style="left:2.50px;top:3px;font-size:13.6px;color:#141414;letter-spacing:0.02px;">http:<span class=sl>/</span><span class=sl>/</span>youtube.com<span class=sl>/</span>channel<span class=sl>/</span>UCveE4V8x22-NvmS309T6RmA</div></div>
<div class="t" style="left:667.00px;top:899.87px;font-size:13.6px;color:#141414;font-weight:normal;">YouTube channel</div>
<div class="t" style="right:720.50px;top:899.87px;font-size:13.6px;color:#141414;font-weight:normal;">2</div>
<div class="t" style="right:621.50px;top:899.87px;font-size:13.6px;color:#141414;font-weight:normal;">1</div>
<div class="t" style="right:538.10px;top:899.87px;font-size:13.6px;color:#141414;font-weight:normal;">200%</div>
<div class="t" style="left:1074.40px;top:899.87px;font-size:13.6px;color:#141414;font-weight:normal;">$</div>
<div class="t" style="right:459.50px;top:899.87px;font-size:13.6px;color:#141414;font-weight:normal;">0.49</div>
<div class="t" style="left:1155.50px;top:899.87px;font-size:13.6px;color:#141414;font-weight:normal;">$</div>
<div class="t" style="right:354.30px;top:899.87px;font-size:13.6px;color:#141414;font-weight:normal;">0.98</div>
<div class="t" style="right:260.60px;top:899.87px;font-size:13.6px;color:#141414;font-weight:normal;">-</div>
<div class="t" style="right:177.50px;top:899.87px;font-size:13.6px;color:#141414;font-weight:normal;">-</div>
<div class="t" style="right:76.90px;top:899.87px;font-size:13.6px;color:#141414;font-weight:normal;">0%</div>
<div class="t" style="left:1371.40px;top:899.87px;font-size:13.6px;color:#141414;font-weight:normal;">$</div>
<div style="position:absolute;left:0px;top:911.5px;width:1600px;height:32px;background:#f1f1f1;"></div>
<div style="position:absolute;left:0px;top:943px;width:1600px;height:1px;background:#c9c9c9;"></div>
<div style="position:absolute;left:0px;top:944px;width:1600px;height:27px;background:#e6e6e6;"></div>
<div style="position:absolute;left:75px;top:911px;width:98.5px;height:28px;background:#fff;border:1px solid #cfcfcf;border-top:none;border-radius:0 0 4px 4px;box-sizing:border-box;"></div>
<div class="t" style="left:99.00px;top:918.90px;font-size:15px;color:#217346;font-weight:bold;">Sheet3</div>
<div class="t" style="left:200.40px;top:918.90px;font-size:15px;color:#5a5a5a;font-weight:normal;letter-spacing:0.3px;">Automatic placements report</div>
<div style="position:absolute;left:429px;top:912px;width:1px;height:25px;background:#d8d8d8;"></div>
<div style="position:absolute;left:476px;top:912px;width:1px;height:25px;background:#d8d8d8;"></div>
<svg style="position:absolute;left:440px;top:919px;" width="26" height="16" viewBox="0 0 26 16"><path d="M7.6 8 H19.6 M13.6 2 V14" stroke="#444" stroke-width="2"/></svg>
<svg style="position:absolute;left:15px;top:922px;" width="50" height="16" viewBox="0 0 50 16"><path d="M2 8 L12 2.5 L12 13.5 Z" fill="#b5b5b5"/><path d="M31 2.5 L41 8 L31 13.5 Z" fill="#b5b5b5"/></svg>
<svg style="position:absolute;left:0;top:0" width="1600" height="971"><line x1="129.5" y1="81" x2="129.5" y2="158.5" stroke="#d2d2d2" stroke-width="1"/><line x1="468" y1="81" x2="468" y2="158.5" stroke="#d2d2d2" stroke-width="1"/><line x1="671.4" y1="81" x2="671.4" y2="158.5" stroke="#d2d2d2" stroke-width="1"/><line x1="740" y1="81" x2="740" y2="158.5" stroke="#d2d2d2" stroke-width="1"/><line x1="960.5" y1="81" x2="960.5" y2="158.5" stroke="#d2d2d2" stroke-width="1"/><line x1="1190" y1="81" x2="1190" y2="158.5" stroke="#d2d2d2" stroke-width="1"/><line x1="1311.7" y1="81" x2="1311.7" y2="158.5" stroke="#d2d2d2" stroke-width="1"/><line x1="1506.3" y1="81" x2="1506.3" y2="158.5" stroke="#d2d2d2" stroke-width="1"/><line x1="263.5" y1="131" x2="263.5" y2="153" stroke="#d2d2d2" stroke-width="1"/><line x1="330.5" y1="131" x2="330.5" y2="153" stroke="#d2d2d2" stroke-width="1"/><line x1="587" y1="91" x2="587" y2="113" stroke="#d2d2d2" stroke-width="1"/><line x1="587" y1="131" x2="587" y2="153" stroke="#d2d2d2" stroke-width="1"/><line x1="874.5" y1="131" x2="874.5" y2="153" stroke="#d2d2d2" stroke-width="1"/><rect x="20.8" y="92.5" width="25" height="29" rx="1.5" fill="#fdf6ec" stroke="#f1a54a" stroke-width="1.6"/><path d="M25.5 97.2 V92.5 H30.5 Q30.5 88 33.3 88 Q36.1 88 36.1 92.5 H41 V97.2 Z" fill="#fff" stroke="#555" stroke-width="1.3" stroke-linejoin="round"/><rect x="37.2" y="102.5" width="16" height="21.5" fill="#fff" stroke="#454545" stroke-width="1.5"/><path d="M60 103.5 L64.0 108.5 L68 103.5" fill="none" stroke="#222" stroke-width="1.6" stroke-linecap="round" stroke-linejoin="round"/><path d="M83.5 86 L89.8 99.5 M92.5 86 L86.2 99.5" stroke="#333" stroke-width="1.1" fill="none"/><circle cx="84.5" cy="102.2" r="2.2" fill="#fff" stroke="#2f8ad8" stroke-width="1.4"/><circle cx="91.5" cy="102.2" r="2.2" fill="#fff" stroke="#2f8ad8" stroke-width="1.4"/><path d="M85.5 129 H78 V112.5 H86.5 L88 114" fill="none" stroke="#333" stroke-width="1.3"/><path d="M85.8 116.5 H93.5 L97.5 120.5 V131.5 H85.8 Z" fill="#fff" stroke="#333" stroke-width="1.3"/><path d="M93.2 116.5 V120.8 H97.5" fill="none" stroke="#333" stroke-width="1"/><path d="M88.5 125 H94.5 M88.5 127.5 H94.5" stroke="#555" stroke-width="0.9"/><path d="M105 120.5 L109.0 125.5 L113 120.5" fill="none" stroke="#222" stroke-width="1.6" stroke-linecap="round" stroke-linejoin="round"/><path d="M90.8 146 L96 140.8" stroke="#333" stroke-width="4.4" stroke-linecap="round"/><path d="M90.8 146 L96 140.8" stroke="#f4f4f4" stroke-width="1.9" stroke-linecap="round"/><path d="M78 148.4 L86 144.4 L93.3 151.5 L86.2 158 Z" fill="#fff6ea" stroke="#f0913a" stroke-width="1.3" stroke-linejoin="round"/><path d="M79.5 149.6 L92.3 152.3 L86.3 156.8 Z" fill="#fbd49c"/><path d="M86 144.4 L88.3 142.2 L95.3 149.2 L93.3 151.5 Z" fill="#fff" stroke="#333" stroke-width="1.3" stroke-linejoin="round"/><rect x="143.5" y="87.8" width="175.6" height="29" rx="4.5" fill="#fff" stroke="#cdcdcd" stroke-width="1"/><rect x="322.8" y="87.8" width="66.5" height="29" rx="4.5" fill="#fff" stroke="#cdcdcd" stroke-width="1"/><path d="M306 100.6 L309.75 105.0 L313.5 100.6" fill="none" stroke="#333" stroke-width="1.5" stroke-linecap="round" stroke-linejoin="round"/><path d="M376.3 100.6 L380.05 105.0 L383.8 100.6" fill="none" stroke="#333" stroke-width="1.5" stroke-linecap="round" stroke-linejoin="round"/><path d="M399.3 108.5 L405.6 92.8 L411.9 108.5 M401.6 103 H409.6" fill="none" stroke="#222" stroke-width="1.35"/><path d="M411.2 97.2 L414 94.3 L416.8 97.2" fill="none" stroke="#2f8ad8" stroke-width="1.3"/><path d="M433.3 108.5 L438.6 96.3 L443.9 108.5 M435.3 104 H441.9" fill="none" stroke="#222" stroke-width="1.3"/><path d="M443.2 93.3 L446.5 96.6 L449.8 93.3" fill="none" stroke="#2f8ad8" stroke-width="1.3"/><path d="M178 0" /><path d="M186.5 135.3 H194.5 M184 146.7 H192 M191.3 135.3 L187.2 146.7" fill="none" stroke="#222" stroke-width="1.5"/><path d="M217.8 135 V142.5 Q217.8 146.7 222.6 146.7 Q227.4 146.7 227.4 142.5 V135" fill="none" stroke="#222" stroke-width="1.5"/><path d="M217 149.6 H228.3" stroke="#222" stroke-width="1.3"/><path d="M241 140.3 L244.75 144.9 L248.5 140.3" fill="none" stroke="#222" stroke-width="1.5" stroke-linecap="round" stroke-linejoin="round"/><path d="M279.5 132.5 H298 V151 M279.5 132.5 V151 M288.7 132.5 V151 M279.5 141.7 H298" fill="none" stroke="#555" stroke-width="1" stroke-dasharray="1.2 1.2"/><path d="M279 151 H298.5" stroke="#222" stroke-width="1.5"/><path d="M308 140.5 L311.75 145.1 L315.5 140.5" fill="none" stroke="#222" stroke-width="1.5" stroke-linecap="round" stroke-linejoin="round"/><path d="M349.5 140 L356 133 L363.5 140.5 L357 147 Z" fill="#fff" stroke="#222" stroke-width="1.3" stroke-linejoin="round"/><path d="M355 132 Q357.5 130.5 358 136" fill="none" stroke="#222" stroke-width="1.2"/><path d="M361.5 137 Q364.5 139 364 145" fill="none" stroke="#1b5fb0" stroke-width="2"/><path d="M375 140.5 L378.75 145.1 L382.5 140.5" fill="none" stroke="#222" stroke-width="1.5" stroke-linecap="round" stroke-linejoin="round"/><path d="M398.3 146.5 L403.7 132.5 L409.1 146.5 M400.3 141.5 H407.1" fill="none" stroke="#222" stroke-width="1.35"/><rect x="394" y="147.8" width="19.5" height="4.4" fill="#e8181e"/><path d="M422 140.5 L425.75 145.1 L429.5 140.5" fill="none" stroke="#222" stroke-width="1.5" stroke-linecap="round" stroke-linejoin="round"/><line x1="487.5" y1="92.6" x2="505" y2="92.6" stroke="#555" stroke-width="1.3"/><line x1="490.5" y1="97.6" x2="502" y2="97.6" stroke="#333" stroke-width="1.8"/><line x1="487.5" y1="102.6" x2="505" y2="102.6" stroke="#555" stroke-width="1.3"/><line x1="520" y1="96" x2="537.5" y2="96" stroke="#333" stroke-width="1.4"/><line x1="523" y1="101.3" x2="534.5" y2="101.3" stroke="#555" stroke-width="1.3"/><line x1="520" y1="106.5" x2="537.5" y2="106.5" stroke="#111" stroke-width="1.8"/><rect x="547" y="87.2" width="29.3" height="29.6" rx="3" fill="#cdcdcd"/><line x1="553" y1="101" x2="570" y2="101" stroke="#444" stroke-width="1.4"/><line x1="556" y1="106.5" x2="567" y2="106.5" stroke="#222" stroke-width="1.8"/><line x1="553" y1="111.5" x2="570" y2="111.5" stroke="#333" stroke-width="1.4"/><text x="0" y="0" transform="translate(607.5 106.5) rotate(-50)" font-family="Liberation Sans" font-size="12.5" fill="#333" letter-spacing="-0.3">ab</text><path d="M609.5 110.5 L622.5 97.5 M617 97.5 H622.5 V103" fill="none" stroke="#2f8ad8" stroke-width="1.3"/><path d="M632 100.6 L635.75 105.0 L639.5 100.6" fill="none" stroke="#222" stroke-width="1.5" stroke-linecap="round" stroke-linejoin="round"/><line x1="487.5" y1="134.6" x2="505" y2="134.6" stroke="#333" stroke-width="1.35"/><line x1="520" y1="134.6" x2="537.5" y2="134.6" stroke="#333" stroke-width="1.35"/><line x1="553" y1="134.6" x2="570" y2="134.6" stroke="#333" stroke-width="1.35"/><line x1="487.5" y1="139.5" x2="500" y2="139.5" stroke="#333" stroke-width="1.35"/><line x1="523" y1="139.5" x2="534.5" y2="139.5" stroke="#333" stroke-width="1.35"/><line x1="558" y1="139.5" x2="570" y2="139.5" stroke="#333" stroke-width="1.35"/><line x1="487.5" y1="144.4" x2="505" y2="144.4" stroke="#333" stroke-width="1.35"/><line x1="520" y1="144.4" x2="537.5" y2="144.4" stroke="#333" stroke-width="1.35"/><line x1="553" y1="144.4" x2="570" y2="144.4" stroke="#333" stroke-width="1.35"/><line x1="487.5" y1="149.3" x2="500" y2="149.3" stroke="#333" stroke-width="1.35"/><line x1="523" y1="149.3" x2="534.5" y2="149.3" stroke="#333" stroke-width="1.35"/><line x1="558" y1="149.3" x2="570" y2="149.3" stroke="#333" stroke-width="1.35"/><line x1="604" y1="134.6" x2="622" y2="134.6" stroke="#333" stroke-width="1.35"/><line x1="614" y1="139.5" x2="622" y2="139.5" stroke="#333" stroke-width="1.35"/><line x1="614" y1="144.4" x2="622" y2="144.4" stroke="#333" stroke-width="1.35"/><line x1="604" y1="149.3" x2="622" y2="149.3" stroke="#333" stroke-width="1.35"/><path d="M612 142 H604.5 M607.5 139 L604.5 142 L607.5 145" fill="none" stroke="#2f8ad8" stroke-width="1.4"/><line x1="636" y1="134.6" x2="654" y2="134.6" stroke="#333" stroke-width="1.35"/><line x1="646" y1="139.5" x2="654" y2="139.5" stroke="#333" stroke-width="1.35"/><line x1="646" y1="144.4" x2="654" y2="144.4" stroke="#333" stroke-width="1.35"/><line x1="636" y1="149.3" x2="654" y2="149.3" stroke="#333" stroke-width="1.35"/><path d="M636 142 H643.5 M640.5 139 L643.5 142 L640.5 145" fill="none" stroke="#2f8ad8" stroke-width="1.4"/><text x="689.8" y="101.5" font-family="Liberation Sans" font-size="12.5" fill="#333" letter-spacing="0.2">ab</text><text x="689.8" y="110.8" font-family="Liberation Sans" font-size="12.5" fill="#333">c</text><path d="M706.8 102.5 Q709 108.8 698.5 108.8 M701.8 105.5 L698.5 108.8 L701.8 112" fill="none" stroke="#2f8ad8" stroke-width="1.4" stroke-linejoin="round"/><path d="M715 100.6 L718.75 105.0 L722.5 100.6" fill="none" stroke="#222" stroke-width="1.6" stroke-linecap="round" stroke-linejoin="round"/><rect x="687.5" y="132.8" width="18.4" height="17.8" fill="#fff" stroke="#222" stroke-width="1"/><path d="M687.5 133 H706 M687.5 150.4 H706" stroke="#222" stroke-width="1.6"/><path d="M688 136.2 H705.5 M688 147 H705.5 M688 136.5 V147 M705.5 136.5 V147" stroke="#2f8ad8" stroke-width="1.2" fill="none"/><path d="M696.7 133 V136 M696.7 147 V150" stroke="#222" stroke-width="1"/><path d="M690.5 141.7 H703 M693 139.2 L690.5 141.7 L693 144.2 M700.5 139.2 L703 141.7 L700.5 144.2" fill="none" stroke="#2f8ad8" stroke-width="1.3"/><path d="M715 140.5 L718.75 145.1 L722.5 140.5" fill="none" stroke="#222" stroke-width="1.6" stroke-linecap="round" stroke-linejoin="round"/><rect x="753.8" y="87.5" width="193.7" height="29.5" rx="4.5" fill="#fff" stroke="#cdcdcd" stroke-width="1"/><path d="M934.3 101 L938.05 105.4 L941.8 101" fill="none" stroke="#333" stroke-width="1.5" stroke-linecap="round" stroke-linejoin="round"/><path d="M767.6 132.5 V152 M771.2 136 Q769.8 134.3 767.4 134.3 Q763.5 134.3 763.5 138.2 Q763.5 140.8 767.5 142 Q771.8 143.3 771.8 146.2 Q771.8 149.8 767.3 149.8 Q764.7 149.8 763.4 148" fill="none" stroke="#2a2a2a" stroke-width="1.3"/><path d="M787.6 140.8 L790.9 144.60000000000002 L794.2 140.8" fill="none" stroke="#111" stroke-width="1.8" stroke-linecap="round" stroke-linejoin="round"/><circle cx="810.8" cy="138.3" r="3.2" fill="none" stroke="#2a2a2a" stroke-width="1.3"/><circle cx="822.3" cy="147.5" r="3.2" fill="none" stroke="#2a2a2a" stroke-width="1.3"/><path d="M823.8 134 L809.2 151.5" stroke="#2a2a2a" stroke-width="1.3"/><path d="M849.5 137.3 Q854.6 137.3 854.3 142.5 Q853.8 148 847.3 150.6 Q850.8 146.6 849.5 143.8 Q846 142.8 846.5 140.2 Q847 137.3 849.5 137.3 Z" fill="#222"/><text x="900" y="141.2" font-family="Liberation Sans" font-size="11.5" fill="#333">.0</text><text x="893.5" y="151" font-family="Liberation Sans" font-size="11.5" fill="#333">.00</text><path d="M901.5 137.5 H891 M894.2 134.3 L891 137.5 L894.2 140.7" fill="none" stroke="#2f8ad8" stroke-width="1.2"/><text x="925.5" y="141.2" font-family="Liberation Sans" font-size="11.5" fill="#333">.00</text><text x="932" y="151" font-family="Liberation Sans" font-size="11.5" fill="#333">.0</text><path d="M922.8 146.5 H933 M929.8 143.3 L933 146.5 L929.8 149.7" fill="none" stroke="#2f8ad8" stroke-width="1.2"/><rect x="988" y="91.2" width="34.8" height="26.8" fill="#fff"/><path d="M988 91.2 H1022.8 V118 H988 Z M988 100.2 H1022.8 M988 109.1 H1022.8 M994.2 91.2 V118 M1010.2 91.2 V118 M1015.8 91.2 V118" fill="none" stroke="#333" stroke-width="1.1"/><rect x="994.2" y="91.2" width="16" height="9" fill="#f7a4a4"/><rect x="994.2" y="109.1" width="18.3" height="8.9" fill="#f7a4a4"/><path d="M994.2 91.2 H1010.2 M994.2 118 H1012.5 M994.2 91.2 V100.2 M994.2 109.1 V118 M994.2 100.2 H1010.2 M994.2 109.1 H1012.5" stroke="#e53935" stroke-width="1.2" fill="none"/><rect x="994.2" y="100.2" width="10.5" height="8.9" fill="#8ec3ee" stroke="#333" stroke-width="1.1"/><path d="M1031 102.5 L1034.75 107.1 L1038.5 102.5" fill="none" stroke="#222" stroke-width="1.5" stroke-linecap="round" stroke-linejoin="round"/><rect x="1059.3" y="91.3" width="34.5" height="26.5" fill="#fff" stroke="#333" stroke-width="1.1"/><rect x="1071" y="100" width="22.8" height="17.8" fill="#8ec3ee"/><path d="M1059.3 100 H1093.8 M1059.3 109 H1093.8 M1071 91.3 V117.8 M1082.3 91.3 V117.8" stroke="#333" stroke-width="1.1" fill="none"/><path d="M1071 100 H1093.8 M1071 100 V117.8" stroke="#2f8ad8" stroke-width="1.5" fill="none"/><path d="M1082.0 114.0 L1096.0 98.0 Q1098.5 95.5 1100.0 97.0 Q1101.0 99.0 1098.5 101.5 L1086.0 117.0 Z" fill="#fff" stroke="#333" stroke-width="1.1"/><path d="M1082.0 114.0 Q1077.5 113.5 1076.5 118.0 Q1075.5 121.5 1072.0 122.5 Q1081.5 125.0 1086.0 117.0 Z" fill="#6aaee8" stroke="#1f78c8" stroke-width="1"/><path d="M1103 102.5 L1106.75 107.1 L1110.5 102.5" fill="none" stroke="#222" stroke-width="1.5" stroke-linecap="round" stroke-linejoin="round"/><rect x="1122.3" y="91.3" width="34.5" height="26.5" fill="#fff" stroke="#333" stroke-width="1.1"/><path d="M1122.3 97 H1156.8 M1122.3 112.5 H1156.8 M1128 91.3 V117.8 M1151 91.3 V117.8" stroke="#333" stroke-width="1" fill="none"/><rect x="1128" y="97" width="23" height="15.5" fill="#8ec3ee" stroke="#2f8ad8" stroke-width="1.3"/><path d="M1145.0 114.0 L1159.0 98.0 Q1161.5 95.5 1163.0 97.0 Q1164.0 99.0 1161.5 101.5 L1149.0 117.0 Z" fill="#fff" stroke="#333" stroke-width="1.1"/><path d="M1145.0 114.0 Q1140.5 113.5 1139.5 118.0 Q1138.5 121.5 1135.0 122.5 Q1144.5 125.0 1149.0 117.0 Z" fill="#6aaee8" stroke="#1f78c8" stroke-width="1"/><path d="M1166 102.5 L1169.75 107.1 L1173.5 102.5" fill="none" stroke="#222" stroke-width="1.5" stroke-linecap="round" stroke-linejoin="round"/><rect x="1207.5" y="86.5" width="19.3" height="16.5" fill="#fff" stroke="#222" stroke-width="1.6"/><path d="M1207.5 92 H1226.8 M1207.5 97.5 H1226.8 M1214 86.5 V103 M1220.5 86.5 V103" stroke="#666" stroke-width="0.8" fill="none"/><rect x="1214" y="92" width="12.8" height="5.5" fill="#8ec3ee" stroke="#2f8ad8" stroke-width="1"/><path d="M1217 94.7 H1208.5 M1211.5 91.7 L1208.5 94.7 L1211.5 97.7" fill="none" stroke="#2f8ad8" stroke-width="1.3"/><path d="M1279 93.3 L1282.75 97.89999999999999 L1286.5 93.3" fill="none" stroke="#222" stroke-width="1.5" stroke-linecap="round" stroke-linejoin="round"/><path d="M1208 119.5 V114.5 H1226.5 V119.5 M1208 125.5 V130.8 H1226.5 V125.5" fill="none" stroke="#222" stroke-width="1.6"/><path d="M1207.5 119.5 H1211 M1207.5 125.5 H1211 M1214 114.5 V131 M1220.5 114.5 V131" stroke="#666" stroke-width="0.8" fill="none"/><path d="M1211 119.5 H1216.5 L1218.5 122.5 L1216.5 125.5 H1211 Z" fill="#8ec3ee" stroke="#2f8ad8" stroke-width="1"/><path d="M1220 119 L1226.5 126 M1226.5 119 L1220 126" stroke="#e53935" stroke-width="1.2"/><path d="M1283 121.3 L1286.75 125.89999999999999 L1290.5 121.3" fill="none" stroke="#222" stroke-width="1.5" stroke-linecap="round" stroke-linejoin="round"/><rect x="1207.5" y="142.5" width="19.3" height="17.5" fill="#fff" stroke="#222" stroke-width="1.5"/><path d="M1207.5 147 H1226.8 M1207.5 155 H1226.8 M1214 142.5 V160 M1220.5 142.5 V160" stroke="#666" stroke-width="0.8" fill="none"/><rect x="1211.5" y="147" width="12" height="8" fill="#8ec3ee" stroke="#2f8ad8" stroke-width="1"/><path d="M1211 140 H1223.5 M1211 138.5 V141.5 M1223.5 138.5 V141.5" stroke="#2f8ad8" stroke-width="1"/><path d="M1287 148.5 L1290.75 153.1 L1294.5 148.5" fill="none" stroke="#222" stroke-width="1.5" stroke-linecap="round" stroke-linejoin="round"/><path d="M1346.5 86.8 H1331.8 L1340 94.7 L1331.5 102.8 H1346.8" fill="none" stroke="#222" stroke-width="1.3" stroke-linejoin="miter"/><path d="M1356 93.5 L1359.75 98.1 L1363.5 93.5" fill="none" stroke="#222" stroke-width="1.5" stroke-linecap="round" stroke-linejoin="round"/><rect x="1329.5" y="114" width="19.5" height="16.8" fill="#fff" stroke="#333" stroke-width="1.3"/><path d="M1329.5 115.5 H1349" stroke="#333" stroke-width="2.2"/><path d="M1339.3 119 V127.5 M1336 124.5 L1339.3 127.8 L1342.6 124.5" fill="none" stroke="#2f8ad8" stroke-width="1.3"/><path d="M1356 121.5 L1359.75 126.1 L1363.5 121.5" fill="none" stroke="#222" stroke-width="1.5" stroke-linecap="round" stroke-linejoin="round"/><path d="M1331.5 143.3 L1346 157.3 M1346 143.3 L1331.5 157.3" stroke="#e84c3d" stroke-width="1.3"/><path d="M1356 148.5 L1359.75 153.1 L1363.5 148.5" fill="none" stroke="#222" stroke-width="1.5" stroke-linecap="round" stroke-linejoin="round"/><path d="M1375.6 102.5 L1381.5 89.5 L1387.4 102.5 M1377.6 98 H1385.4" fill="none" stroke="#2f8ad8" stroke-width="1.4"/><path d="M1376.5 106.3 H1386 L1376 120.7 H1386.5" fill="none" stroke="#222" stroke-width="1.3"/><path d="M1390.6 96.8 H1410 V98.5 L1403 105.5 V115 H1398 V105.5 L1390.6 98.5 Z" fill="#fff" stroke="#222" stroke-width="1.2" stroke-linejoin="round"/><path d="M1419 102.5 L1422.75 107.1 L1426.5 102.5" fill="none" stroke="#222" stroke-width="1.5" stroke-linecap="round" stroke-linejoin="round"/><circle cx="1459.6" cy="99.8" r="12.4" fill="#fff" stroke="#222" stroke-width="1.2"/><path d="M1437 123.2 L1450.8 108.8" stroke="#222" stroke-width="1.2"/><path d="M1481 103 L1484.75 107.6 L1488.5 103" fill="none" stroke="#222" stroke-width="1.5" stroke-linecap="round" stroke-linejoin="round"/><path d="M1542.2 87.5 H1552.8 L1543.6 102.6 H1555 L1535.2 121.4 H1530.6 L1538 107.7 H1528.8 Z" fill="#8ec3ee" stroke="#1f78c8" stroke-width="1" stroke-linejoin="miter"/></svg>
<div class="t" style="left:24.50px;top:131.17px;font-size:13.5px;color:#1a1a1a;font-weight:normal;letter-spacing:0.1px;">Paste</div>
<div class="t" style="left:150.60px;top:95.89px;font-size:15.6px;color:#111;font-weight:normal;">Calibri (Body)</div>
<div class="t" style="left:329.50px;top:95.89px;font-size:15.6px;color:#111;font-weight:normal;">12</div>
<div class="t" style="left:153.00px;top:133.63px;font-size:16.5px;color:#222;font-weight:bold;">B</div>
<div class="t" style="left:761.50px;top:96.20px;font-size:15px;color:#111;font-weight:normal;">General</div>
<div class="t" style="left:977.00px;top:131.46px;font-size:13.4px;color:#1a1a1a;font-weight:normal;letter-spacing:0.4px;">Conditional</div>
<div class="t" style="left:978.50px;top:146.46px;font-size:13.4px;color:#1a1a1a;font-weight:normal;letter-spacing:0.4px;">Formatting</div>
<div class="t" style="left:1061.00px;top:131.46px;font-size:13.4px;color:#1a1a1a;font-weight:normal;letter-spacing:0.4px;">Format</div>
<div class="t" style="left:1058.50px;top:146.46px;font-size:13.4px;color:#1a1a1a;font-weight:normal;letter-spacing:0.35px;">as Table</div>
<div class="t" style="left:1134.00px;top:131.46px;font-size:13.4px;color:#1a1a1a;font-weight:normal;letter-spacing:0.4px;">Cell</div>
<div class="t" style="left:1127.30px;top:146.46px;font-size:13.4px;color:#1a1a1a;font-weight:normal;letter-spacing:0.4px;">Styles</div>
<div class="t" style="left:1235.30px;top:89.06px;font-size:13.4px;color:#1a1a1a;font-weight:normal;letter-spacing:0.4px;">Insert</div>
<div class="t" style="left:1235.30px;top:116.56px;font-size:13.4px;color:#1a1a1a;font-weight:normal;letter-spacing:0.4px;">Delete</div>
<div class="t" style="left:1235.30px;top:144.26px;font-size:13.4px;color:#1a1a1a;font-weight:normal;letter-spacing:0.4px;">Format</div>
<div class="t" style="left:1380.50px;top:131.06px;font-size:13.4px;color:#1a1a1a;font-weight:normal;letter-spacing:0.4px;">Sort &amp;</div>
<div class="t" style="left:1384.50px;top:145.86px;font-size:13.4px;color:#1a1a1a;font-weight:normal;letter-spacing:0.4px;">Filter</div>
<div class="t" style="left:1442.50px;top:131.06px;font-size:13.4px;color:#1a1a1a;font-weight:normal;letter-spacing:0.35px;">Find &amp;</div>
<div class="t" style="left:1442.50px;top:145.86px;font-size:13.4px;color:#1a1a1a;font-weight:normal;letter-spacing:0.35px;">Select</div>
<div class="t" style="left:1524.80px;top:131.26px;font-size:13.4px;color:#1a1a1a;font-weight:normal;letter-spacing:0.35px;">Ideas</div>
<svg style="position:absolute;left:0;top:0" width="1600" height="971"><rect x="252.50" y="234.10" width="18.5" height="18" rx="1.5" fill="#fff" stroke="#c6c6c6" stroke-width="1"/><path d="M256.75 240.60 H266.75 L261.75 246.20 Z" fill="#858585"/><rect x="644.00" y="234.10" width="18.5" height="18" rx="1.5" fill="#fff" stroke="#c6c6c6" stroke-width="1"/><path d="M648.25 240.60 H658.25 L653.25 246.20 Z" fill="#858585"/><rect x="783.00" y="234.10" width="18.5" height="18" rx="1.5" fill="#fff" stroke="#c6c6c6" stroke-width="1"/><path d="M787.25 240.60 H797.25 L792.25 246.20 Z" fill="#858585"/><rect x="867.50" y="234.10" width="18.5" height="18" rx="1.5" fill="#fff" stroke="#c6c6c6" stroke-width="1"/><path d="M871.75 240.60 H881.75 L876.75 246.20 Z" fill="#858585"/><rect x="965.50" y="234.10" width="18.5" height="18" rx="1.5" fill="#fff" stroke="#c6c6c6" stroke-width="1"/><path d="M969.75 240.60 H979.75 L974.75 246.20 Z" fill="#858585"/><rect x="1128.00" y="234.10" width="18.5" height="18" rx="1.5" fill="#fff" stroke="#c6c6c6" stroke-width="1"/><path d="M1132.25 240.60 H1142.25 L1137.25 246.20 Z" fill="#858585"/><rect x="1233.70" y="234.10" width="18.5" height="18" rx="1.5" fill="#fff" stroke="#c6c6c6" stroke-width="1"/><path d="M1237.95 240.60 H1247.95 L1242.95 246.20 Z" fill="#858585"/><rect x="1343.90" y="234.10" width="18.5" height="18" rx="1.5" fill="#fff" stroke="#c6c6c6" stroke-width="1"/><path d="M1348.15 240.60 H1358.15 L1353.15 246.20 Z" fill="#858585"/><rect x="1425.00" y="234.10" width="18.5" height="18" rx="1.5" fill="#fff" stroke="#c6c6c6" stroke-width="1"/><path d="M1429.25 240.60 H1439.25 L1434.25 246.20 Z" fill="#858585"/><rect x="1507.10" y="234.10" width="18.5" height="18" rx="1.5" fill="#fff" stroke="#c6c6c6" stroke-width="1"/><path d="M1511.35 240.60 H1521.35 L1516.35 246.20 Z" fill="#858585"/><line x1="1046.5" y1="235" x2="1046.5" y2="251.5" stroke="#999" stroke-width="1"/><path d="M1049.5 244 H1057 L1053.25 248 Z" fill="#777"/><path d="M1061 237.5 V248 M1058.2 245 L1061 248.2 L1063.8 245" fill="none" stroke="#777" stroke-width="1.2"/><rect x="984.2" y="232.5" width="82.8" height="21" fill="none" stroke="#1e6b45" stroke-width="2.2"/><rect x="1063" y="250" width="6.5" height="6.5" fill="#1e6b45" stroke="#fff" stroke-width="0.8"/><rect x="978.2" y="225.5" width="94.6" height="687" fill="none" stroke="#fb6a18" stroke-width="4"/><path d="M1133.2 273 H1138.6 V278.5 H1144 V283.9 H1138.6 V289.3 H1133.2 V283.9 H1127.8 V278.5 H1133.2 Z" fill="#fff" stroke="#222" stroke-width="1"/><path d="M24 211.5 V229 H5.5 Z" fill="#d9d9d9"/></svg>
<svg style="position:absolute;left:0;top:0" width="1600" height="971"><path d="M90.5 182 L94.5 176 L98.5 182 Z M90.5 190.5 H98.5 L94.5 196.5 Z" fill="#666"/><path d="M124.5 180.5 L137 193 M137 180.5 L124.5 193" stroke="#c4c4c4" stroke-width="1.8"/><path d="M159.5 187 L165 192.5 L176 181" fill="none" stroke="#c9c9c9" stroke-width="1.8"/><text x="196" y="193.5" font-family="Liberation Serif" font-style="italic" font-size="19" fill="#333">f</text><text x="203.5" y="193.5" font-family="Liberation Serif" font-style="italic" font-size="17" fill="#333">x</text><path d="M1588 183.5 H1598 L1593 190.5 Z" fill="#555"/></svg>
<svg style="position:absolute;left:0;top:0" width="1600" height="971"><path d="M245.5 17.8 L255.3 8.6 L265.2 17.8" fill="none" stroke="#f0f5f2" stroke-width="2.6" stroke-linejoin="miter"/><path d="M248.8 17 V27 H253 V21.5 H257.6 V27 H261.8 V17 L255.3 11.5 Z" fill="#f0f5f2"/><path d="M278 9.5 H294 L296 11.5 V27 H278 Z" fill="#f0f5f2"/><rect x="281" y="11.5" width="12" height="6.5" fill="#2f7b55"/><rect x="282.5" y="21" width="9" height="6" fill="#2f7b55"/><rect x="285" y="23" width="3" height="4" fill="#f0f5f2"/><path d="M307 9.5 H322 V12 L316 18 H310 V21.5 H313 L311.5 27 H307 Z" fill="#f0f5f2"/><rect x="310" y="11.5" width="10" height="5" fill="#2f7b55"/><path d="M313.5 25.5 L326.5 12.5 L329.5 15.5 L316.5 28.5 L312.5 29 Z" fill="#f0f5f2"/><path d="M326 16 L317 25" stroke="#2f7b55" stroke-width="1"/><path d="M322.5 27 H325.5 V20.5" fill="none" stroke="#f0f5f2" stroke-width="2.2"/><path d="M341.5 15 H353 Q359 15 359 21 Q359 26.5 353 26.5" fill="none" stroke="#f0f5f2" stroke-width="2.4"/><path d="M346.5 9.8 L341 15 L346.5 20.2" fill="none" stroke="#f0f5f2" stroke-width="2.4" stroke-linejoin="miter"/><path d="M368.3 16.5 L372 20.3 L375.7 16.5" fill="none" stroke="#f0f5f2" stroke-width="1.3"/><path d="M390 14.5 A7.6 7.6 0 1 0 403.2 14 L398.5 10" fill="none" stroke="#f0f5f2" stroke-width="2.4"/><path d="M397.8 18.5 V9.6 H406" fill="none" stroke="#f0f5f2" stroke-width="2.4"/><path d="M423.8 15 H433" stroke="#f0f5f2" stroke-width="1.6"/><path d="M423.5 18.5 H433.3 L428.4 24 Z" fill="#f0f5f2"/><path d="M674.5 9 H684.5 L689 13.5 V27 H674.5 Z" fill="#f4f7f5"/><path d="M684.5 9 V13.5 H689" fill="#c9d8cf"/><rect x="672" y="14" width="9" height="9" fill="#b7cbbf"/><text x="673.5" y="21.5" font-family="Liberation Sans" font-size="8" font-weight="bold" fill="#f4f7f5">X</text><path d="M682.5 15.5 H687.5 M682.5 18.5 H687.5 M682.5 21.5 H687.5" stroke="#b7cbbf" stroke-width="1.2"/><path d="M921 16.2 L925.5 20 L930 16.2" fill="none" stroke="#8ab39c" stroke-width="1"/><circle cx="1521.6" cy="16.3" r="5.8" fill="none" stroke="#f0f5f2" stroke-width="1.8"/><path d="M1525.8 20.5 L1532 26.7" stroke="#f0f5f2" stroke-width="2"/><circle cx="1565" cy="17.8" r="9.3" fill="none" stroke="#f0f5f2" stroke-width="1.8"/><circle cx="1561.8" cy="15" r="1.3" fill="#f0f5f2"/><circle cx="1568.2" cy="15" r="1.3" fill="#f0f5f2"/><path d="M1560.5 19.5 Q1565 24.5 1569.5 19.5" fill="none" stroke="#f0f5f2" stroke-width="1.6"/><path d="M1583.3 16.2 L1586.5 19.4 L1589.7 16.2" fill="none" stroke="#f0f5f2" stroke-width="1.6"/><path d="M1386.5 60 V66.5 H1398.5" fill="none" stroke="#1d6b45" stroke-width="1.4"/><path d="M1390 63.5 Q1390 56.5 1397.5 56.5 H1399.5 V53.5 L1404 58 L1399.5 62.5 V59.5 H1397.5 Q1392.5 59.5 1390 63.5 Z" fill="none" stroke="#1d6b45" stroke-width="1.3" stroke-linejoin="round"/><path d="M1482.5 51.5 H1496.5 V61 H1487.5 L1484.5 64.5 V61 H1482.5 Z" fill="none" stroke="#1d6b45" stroke-width="1.4" stroke-linejoin="round"/></svg>
<div class="t" style="left:695.90px;top:10.71px;font-size:17px;color:#eef4f0;font-weight:normal;letter-spacing:0.13px;">Automatic placements report</div>
<svg style="position:absolute;left:0;top:0" width="1600" height="971"><rect x="1205.5" y="945" width="45" height="26" fill="#c8c8c8"/><rect x="1221.0" y="951.5" width="4" height="3.6" fill="#777"/><rect x="1221.0" y="956.5" width="4" height="3.6" fill="#777"/><rect x="1221.0" y="961.5" width="4" height="3.6" fill="#777"/><rect x="1226.4" y="951.5" width="4" height="3.6" fill="#777"/><rect x="1226.4" y="956.5" width="4" height="3.6" fill="#777"/><rect x="1226.4" y="961.5" width="4" height="3.6" fill="#777"/><rect x="1231.8" y="951.5" width="4" height="3.6" fill="#777"/><rect x="1231.8" y="956.5" width="4" height="3.6" fill="#777"/><rect x="1231.8" y="961.5" width="4" height="3.6" fill="#777"/><rect x="1264.5" y="951.5" width="17" height="13.5" fill="none" stroke="#555" stroke-width="1.3"/><path d="M1268 955 H1278 M1268 958.2 H1278 M1268 961.4 H1278" stroke="#555" stroke-width="1"/><path d="M1308.5 951.5 H1325.5 V965 H1308.5 Z M1316 951.5 V958 H1325.5 M1312 951.5 V960" fill="none" stroke="#555" stroke-width="1.3"/><path d="M1350 958.3 H1360" stroke="#555" stroke-width="1.8"/><path d="M1370.5 958.3 H1493" stroke="#b8b8b8" stroke-width="3.5" stroke-linecap="round"/><circle cx="1431.3" cy="958.3" r="7" fill="#fbfbfb" stroke="#c2c2c2" stroke-width="0.8"/><path d="M1503 958.3 H1513 M1508 953.3 V963.3" stroke="#555" stroke-width="1.8"/></svg>
<div class="t" style="left:1534.00px;top:953.25px;font-size:14px;color:#555;font-weight:normal;letter-spacing:0.4px;">100%</div>
</body></html>
